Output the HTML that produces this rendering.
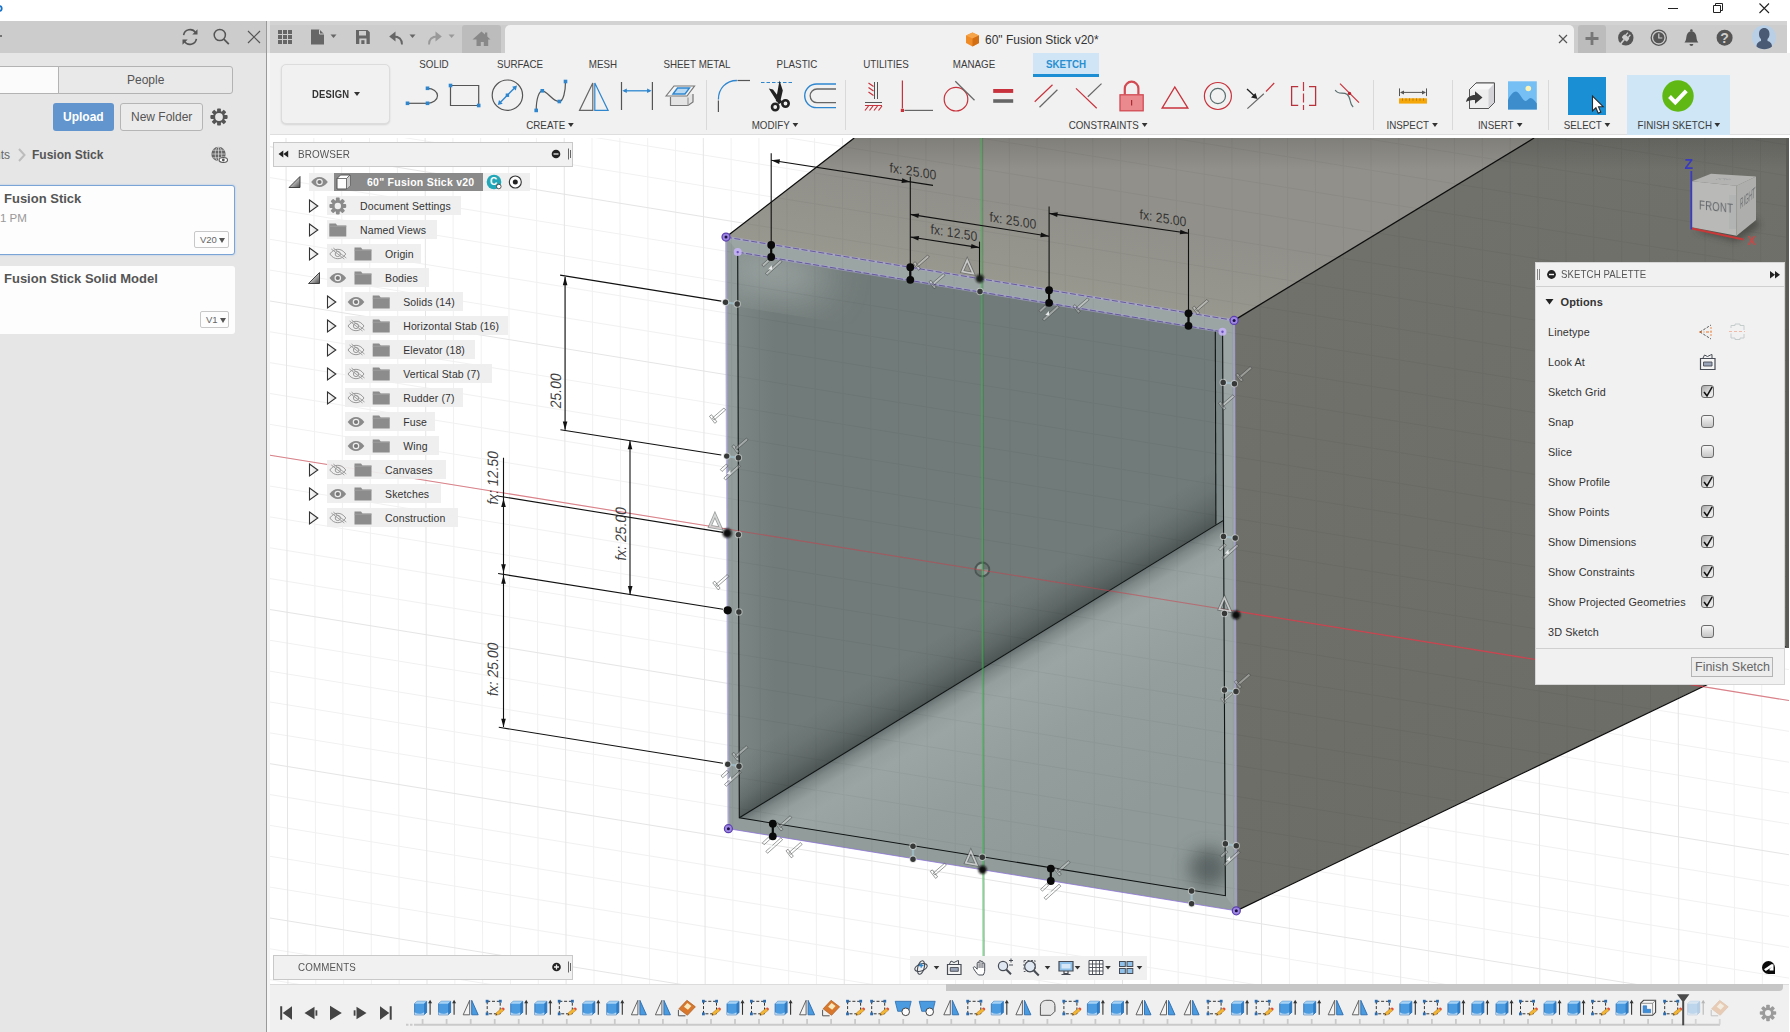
<!DOCTYPE html>
<html lang="en">
<head>
<meta charset="utf-8">
<title>60" Fusion Stick v20 - Fusion 360</title>
<style>
*{box-sizing:border-box;margin:0;padding:0}
html,body{width:1790px;height:1032px;overflow:hidden;background:#fff}
body{position:relative;font-family:"Liberation Sans",sans-serif;font-size:11px;color:#4a4a4a}
.abs{position:absolute}
svg{position:absolute;overflow:visible}
.t{position:absolute;white-space:nowrap;line-height:1}
/* top bars */
#leftbar{left:0;top:21px;width:267px;height:32px;background:#cccccc}
#left{left:0;top:53px;width:267px;height:979px;background:#e6e6e6}
#leftedge{left:266px;top:21px;width:1px;height:1011px;background:#9a9a9a}
#gap{left:267px;top:21px;width:3px;height:1011px;background:linear-gradient(#e2e2e2 0,#e2e2e2 32px,#f6f6f6 32px)}
#topbar{left:270px;top:21px;width:1517px;height:32px;background:#cdcdcd}
#topstrip{left:270px;top:21px;width:1517px;height:4px;background:#d3d3d3}
#toolbar{left:270px;top:53px;width:1520px;height:82px;background:#f1f1f1;border-bottom:1px solid #dedede}
#homebtn{left:462px;top:25px;width:39px;height:28px;background:#bcbcbc;border-radius:3px 3px 0 0}
#doctab{left:505px;top:25px;width:1069px;height:28px;background:#f1f1f1;border-radius:5px 5px 0 0}
#plusbtn{left:1578px;top:25px;width:28px;height:28px;background:#bcbcbc;border-radius:3px 3px 0 0}
.tab{position:absolute;top:58.5px;font-size:10.3px;color:#3c3c3c;white-space:nowrap;line-height:12px;transform:translateX(-50%) scaleX(.95)}
.grp{position:absolute;top:119.7px;font-size:10.3px;color:#3c3c3c;white-space:nowrap;line-height:12px;transform:translateX(-50%) scaleX(.95)}
.grp i,.dd{display:inline-block;width:0;height:0;border-left:3.5px solid transparent;border-right:3.5px solid transparent;border-top:4.5px solid #333;vertical-align:middle;margin-left:3px;position:relative;top:-1px}
.sep{position:absolute;top:80px;width:1px;height:50px;background:#d9d9d9}
/* left panel */
.btn{position:absolute;border:1px solid #b5b5b5;border-radius:3px;background:#ebebeb;font-size:12px;color:#555;text-align:center}
.card{position:absolute;left:-6px;width:241px;background:#fdfdfd;border-radius:3px}
.ver{position:absolute;border:1px solid #c8c8c8;border-radius:2px;background:#fdfdfd;font-size:9.5px;color:#666;height:17px;line-height:15px;padding-left:5px}
.ver i{display:inline-block;width:0;height:0;border-left:3.5px solid transparent;border-right:3.5px solid transparent;border-top:5px solid #555;margin-left:2px;position:relative;top:0px}
/* browser */
.row{position:absolute;height:18px;background:rgba(238,238,238,.93)}
.rt{position:absolute;font-size:10.5px;color:#333;white-space:nowrap;line-height:12px;letter-spacing:.13px}
.panelhdr{position:absolute;background:#f1f1f1;border:1px solid #c9c9c9}
/* palette */
#pal{left:1535px;top:262px;width:250px;height:423px;background:#f1f1f1;border:1px solid #d5d5d5}
.pl{position:absolute;left:1548px;font-size:10.5px;color:#333;white-space:nowrap;line-height:12px;letter-spacing:.13px}
.cb{position:absolute;left:1701px;width:13px;height:13px;border:1px solid #6a6a6a;border-radius:3px;background:linear-gradient(#f6f6f6,#c6c6c6)}
</style>
</head>
<body>
<svg id="cv" style="left:270px;top:138px;overflow:hidden" width="1519" height="846" viewBox="270 138 1519 846" font-family="Liberation Sans, sans-serif">
<defs>
<filter id="b1" x="-50%" y="-50%" width="200%" height="200%"><feGaussianBlur stdDeviation=".9"/></filter>
<filter id="b8" x="-50%" y="-50%" width="200%" height="200%"><feGaussianBlur stdDeviation="9"/></filter>
<filter id="b20" x="-50%" y="-50%" width="200%" height="200%"><feGaussianBlur stdDeviation="22"/></filter>
<linearGradient id="gtop" x1="980" y1="279" x2="993" y2="200" gradientUnits="userSpaceOnUse"><stop offset="0" stop-color="#99988f"/><stop offset=".5" stop-color="#94938c"/><stop offset="1" stop-color="#91908a"/></linearGradient>
<linearGradient id="gright" x1="1234" y1="320" x2="1500" y2="800" gradientUnits="userSpaceOnUse"><stop offset="0" stop-color="#70716b"/><stop offset="1" stop-color="#6c6d66"/></linearGradient>
<linearGradient id="gback" x1="740" y1="0" x2="775" y2="0" gradientUnits="userSpaceOnUse"><stop offset="0" stop-color="#7b8684"/><stop offset="1" stop-color="#717b79"/></linearGradient>
<linearGradient id="gao" x1="981" y1="669" x2="955" y2="626.500" gradientUnits="userSpaceOnUse"><stop offset="0" stop-color="#1c2424" stop-opacity=".42"/><stop offset=".3" stop-color="#1c2424" stop-opacity=".22"/><stop offset=".65" stop-color="#1c2424" stop-opacity=".07"/><stop offset="1" stop-color="#1c2424" stop-opacity="0"/></linearGradient>
<linearGradient id="gfloor" x1="981" y1="669" x2="1085.600" y2="839.400" gradientUnits="userSpaceOnUse"><stop offset="0" stop-color="#667070"/><stop offset=".035" stop-color="#7e8988"/><stop offset=".09" stop-color="#95a09e"/><stop offset=".17" stop-color="#9ba6a4"/><stop offset=".5" stop-color="#949f9d"/><stop offset="1" stop-color="#909b99"/></linearGradient>
<clipPath id="cback"><polygon points="737.7,252.1 1222.5,331.8 1223.5,520.4 739.3,817.8"/></clipPath>
<clipPath id="cfloor"><polygon points="739.3,817.8 1223.5,520.4 1225.4,895.7"/></clipPath>
<clipPath id="cmodel"><polygon points="726,237.1 854.2,138 1789,138 1789,645 1236.3,910.8 728.4,828.7"/></clipPath>
</defs>
<rect x="270" y="138" width="1519" height="846" fill="#fff"/>
<path d="M230.4 138L232.3 984M258.2 138L260.1 984M313.8 138L315.8 984M341.6 138L343.6 984M369.5 138L371.4 984M397.3 138L399.2 984M452.9 138L454.9 984M480.7 138L482.7 984M508.6 138L510.5 984M536.4 138L538.3 984M592.0 138L594.0 984M619.8 138L621.8 984M647.7 138L649.6 984M675.5 138L677.4 984M731.1 138L733.1 984M758.9 138L760.9 984M786.8 138L788.7 984M814.6 138L816.5 984M870.2 138L872.2 984M898.0 138L900.0 984M925.9 138L927.8 984M953.7 138L955.6 984M1009.3 138L1011.3 984M1037.1 138L1039.1 984M1065.0 138L1066.9 984M1092.8 138L1094.7 984M1148.4 138L1150.4 984M1176.2 138L1178.2 984M1204.1 138L1206.0 984M1231.9 138L1233.8 984M1287.5 138L1289.5 984M1315.3 138L1317.3 984M1343.2 138L1345.1 984M1371.0 138L1372.9 984M1426.6 138L1428.6 984M1454.4 138L1456.4 984M1482.3 138L1484.2 984M1510.1 138L1512.0 984M1565.7 138L1567.7 984M1593.5 138L1595.5 984M1621.4 138L1623.3 984M1649.2 138L1651.1 984M1704.8 138L1706.8 984M1732.6 138L1734.6 984M1760.5 138L1762.4 984M1788.3 138L1790.2 984M270 -100.1L1790 145.4M270 -69.2L1790 176.2M270 -38.4L1790 207.1M270 23.3L1790 268.8M270 54.2L1790 299.6M270 85.0L1790 330.5M270 115.9L1790 361.3M270 177.6L1790 423.0M270 208.4L1790 453.9M270 239.3L1790 484.7M270 270.1L1790 515.6M270 331.8L1790 577.3M270 362.7L1790 608.1M270 393.5L1790 639.0M270 424.4L1790 669.8M270 486.1L1790 731.5M270 516.9L1790 762.4M270 547.8L1790 793.2M270 578.6L1790 824.1M270 640.3L1790 885.8M270 671.2L1790 916.6M270 702.0L1790 947.5M270 732.9L1790 978.3M270 794.6L1790 1040.0M270 825.4L1790 1070.9M270 856.3L1790 1101.7M270 887.1L1790 1132.6M270 948.8L1790 1194.3M270 979.7L1790 1225.1" stroke="#f1f1f1" stroke-width="1" fill="none"/>
<path d="M286.0 138L287.9 984M425.1 138L427.0 984M564.2 138L566.1 984M703.3 138L705.2 984M842.4 138L844.3 984M981.5 138L983.4 984M1120.6 138L1122.5 984M1259.7 138L1261.6 984M1398.8 138L1400.7 984M1537.9 138L1539.8 984M1677.0 138L1678.9 984M1816.1 138L1818.0 984M270 -7.5L1790 237.9M270 146.7L1790 392.2M270 301.0L1790 546.4M270 455.2L1790 700.7M270 609.5L1790 854.9M270 763.7L1790 1009.2M270 918.0L1790 1163.4" stroke="#e5e5e5" stroke-width="1" fill="none"/>
<polygon points="726,237.1 854.2,138 1534.1,138 1234.1,320.4" fill="url(#gtop)"/>
<polygon points="1234.1,320.4 1534.1,138 1789,138 1789,645 1236.300,910.8" fill="url(#gright)"/>
<polygon points="726,237.1 1234.1,320.4 1236.300,910.8 728.4,828.7" fill="#929d9b"/>
<polygon points="726,237.1 1234.1,320.4 1236.300,910.8 1225.4,895.7 1222.5,331.8 737.7,252.1" fill="#9ba5a3"/>
<polygon points="737.7,252.1 1222.5,331.8 1225.4,895.7 739.3,817.8" fill="url(#gback)"/>
<g clip-path="url(#cback)"><ellipse cx="775" cy="272" rx="55" ry="20" fill="#b0b8b6" opacity=".85" filter="url(#b20)" transform="rotate(9 775 272)"/><polygon points="737.7,252.1 1222.5,331.8 1223.5,520.4 739.3,817.8" fill="url(#gao)"/></g>
<polygon points="739.3,817.8 1223.5,520.4 1225.4,895.7" fill="url(#gfloor)"/>
<g clip-path="url(#cfloor)"><circle cx="1209" cy="868" r="20" fill="#4e5757" opacity=".8" filter="url(#b8)"/></g>
<polygon points="1215.300,330.4 1222.8,331.8 1223.5,520.4 1215.9,525" fill="#7b8786"/>
<g clip-path="url(#cmodel)" opacity=".04"><path d="M230.4 138L232.3 984M258.2 138L260.1 984M313.8 138L315.8 984M341.6 138L343.6 984M369.5 138L371.4 984M397.3 138L399.2 984M452.9 138L454.9 984M480.7 138L482.7 984M508.6 138L510.5 984M536.4 138L538.3 984M592.0 138L594.0 984M619.8 138L621.8 984M647.7 138L649.6 984M675.5 138L677.4 984M731.1 138L733.1 984M758.9 138L760.9 984M786.8 138L788.7 984M814.6 138L816.5 984M870.2 138L872.2 984M898.0 138L900.0 984M925.9 138L927.8 984M953.7 138L955.6 984M1009.3 138L1011.3 984M1037.1 138L1039.1 984M1065.0 138L1066.9 984M1092.8 138L1094.7 984M1148.4 138L1150.4 984M1176.2 138L1178.2 984M1204.1 138L1206.0 984M1231.9 138L1233.8 984M1287.5 138L1289.5 984M1315.3 138L1317.3 984M1343.2 138L1345.1 984M1371.0 138L1372.9 984M1426.6 138L1428.6 984M1454.4 138L1456.4 984M1482.3 138L1484.2 984M1510.1 138L1512.0 984M1565.7 138L1567.7 984M1593.5 138L1595.5 984M1621.4 138L1623.3 984M1649.2 138L1651.1 984M1704.8 138L1706.8 984M1732.6 138L1734.6 984M1760.5 138L1762.4 984M1788.3 138L1790.2 984M270 -100.1L1790 145.4M270 -69.2L1790 176.2M270 -38.4L1790 207.1M270 23.3L1790 268.8M270 54.2L1790 299.6M270 85.0L1790 330.5M270 115.9L1790 361.3M270 177.6L1790 423.0M270 208.4L1790 453.9M270 239.3L1790 484.7M270 270.1L1790 515.6M270 331.8L1790 577.3M270 362.7L1790 608.1M270 393.5L1790 639.0M270 424.4L1790 669.8M270 486.1L1790 731.5M270 516.9L1790 762.4M270 547.8L1790 793.2M270 578.6L1790 824.1M270 640.3L1790 885.8M270 671.2L1790 916.6M270 702.0L1790 947.5M270 732.9L1790 978.3M270 794.6L1790 1040.0M270 825.4L1790 1070.9M270 856.3L1790 1101.7M270 887.1L1790 1132.6M270 948.8L1790 1194.3M270 979.7L1790 1225.1" stroke="#000" stroke-width="1" fill="none"/>
<path d="M286.0 138L287.9 984M425.1 138L427.0 984M564.2 138L566.1 984M703.3 138L705.2 984M842.4 138L844.3 984M981.5 138L983.4 984M1120.6 138L1122.5 984M1259.7 138L1261.6 984M1398.8 138L1400.7 984M1537.9 138L1539.8 984M1677.0 138L1678.9 984M1816.1 138L1818.0 984M270 -7.5L1790 237.9M270 146.7L1790 392.2M270 301.0L1790 546.4M270 455.2L1790 700.7M270 609.5L1790 854.9M270 763.7L1790 1009.2M270 918.0L1790 1163.4" stroke="#000" stroke-width="1" fill="none"/></g>
<g stroke="#0d0d0d" stroke-width="1.300" fill="none"><path d="M726 237.1L854.2 138"/><path d="M1234.1 320.4L1534.1 138"/><path d="M1236.300 910.8L1789 645.300"/></g>
<g stroke="#101414" stroke-width="1.100" fill="none"><path d="M739.300 817.8L1223.500 520.400"/><path d="M1215.300 330.400L1215.900 524.500"/><path d="M737.700 252.100L739.300 817.800L1225.400 895.700L1222.600 331.800"/></g>
<linearGradient id="gsh" x1="0" y1="138" x2="0" y2="170" gradientUnits="userSpaceOnUse"><stop offset="0" stop-color="#000" stop-opacity=".12"/><stop offset="1" stop-color="#000" stop-opacity="0"/></linearGradient>
<polygon points="812.800,170 854.2,138 1789,138 1789,170" fill="url(#gsh)"/>
<g><circle cx="982.300" cy="569.500" r="7" fill="#69736f" opacity=".9"/><path d="M982.300 569.500h-5.800a5.800 5.800 0 0 1 5.800-5.800z" fill="#94a098"/><path d="M982.300 569.500h5.800a5.800 5.800 0 0 1-5.800 5.800z" fill="#8f9a96"/><circle cx="982.300" cy="569.500" r="7" fill="none" stroke="#4c5654" stroke-width="1.800"/></g>
<path d="M270 455.200L727 529M1703 686.600L1790 700.700" stroke="#d22d3c" stroke-width="1.100" fill="none" opacity=".55"/>
<path d="M727 529L1236 611.200" stroke="#d8404e" stroke-width="1.100" fill="none" opacity=".5"/>
<path d="M1236 611.200L1703 686.600" stroke="#d8404e" stroke-width="1.300" fill="none" opacity=".85"/>
<path d="M981.500 138L983.400 956" stroke="#3cbe50" stroke-width="2" fill="none" opacity=".5"/>
<path d="M982.600 138L984.500 956" stroke="#1e3c22" stroke-width=".6" fill="none" opacity=".35"/>
<g stroke="#8a6fd8" stroke-width="1" fill="none"><path d="M1234.100 320.400L1236.300 910.800M728.400 828.700L726 237.100" stroke="#a5a0d2" stroke-width="2" opacity=".75"/><path d="M1236.300 910.800L728.400 828.700" opacity=".75"/><path d="M726 237.100L1234.100 320.400M737.700 252.100L1222.500 331.800" stroke="#aaa6d4" stroke-width="2.600" opacity=".6"/><path d="M726 237.100L1234.100 320.400M737.700 252.100L1222.500 331.800" stroke="#5a4c96" stroke-width="1" opacity=".85" stroke-dasharray="6 2.500"/></g>
<g stroke="#111" stroke-width="1.100" fill="none">
<path d="M771.200 153.300V245"/>
<path d="M910.300 176.700V280"/>
<path d="M979.500 241.600V278.400"/>
<path d="M1049.100 206.400V303"/>
<path d="M1188.500 229V326"/>
<path d="M771.200 160.300L933 185.400"/>
<path d="M910.300 214.400L1049.100 236.200"/>
<path d="M910.300 237L979.500 247.600"/>
<path d="M1049.100 213.400L1188.500 233.200"/>
<path d="M560.100 275.100L721.300 301.100"/>
<path d="M560.400 429.700L721.300 455"/>
<path d="M497.600 496L723 532.400"/>
<path d="M498.100 573.500L723 609.200"/>
<path d="M498.800 727.300L723 763.300"/>
<path d="M565.100 277V429.700"/>
<path d="M630 441V594.400"/>
<path d="M503.500 457.800V727"/>
</g>
<path d="M771.2 160.3L780.0 159.3L779.2 163.9z" fill="#111"/>
<path d="M910.3 181.9L901.5 182.9L902.3 178.3z" fill="#111"/>
<path d="M910.3 214.4L919.1 213.4L918.3 218.0z" fill="#111"/>
<path d="M1049.1 236.2L1040.3 237.2L1041.1 232.6z" fill="#111"/>
<path d="M910.3 237.0L919.1 236.0L918.3 240.6z" fill="#111"/>
<path d="M979.5 247.6L970.7 248.6L971.5 244.0z" fill="#111"/>
<path d="M1049.1 213.4L1057.8 212.3L1057.2 216.9z" fill="#111"/>
<path d="M1188.5 233.2L1179.8 234.3L1180.4 229.7z" fill="#111"/>
<path d="M565.1 276.8L567.4 285.3L562.8 285.3z" fill="#111"/>
<path d="M565.1 429.9L562.8 421.4L567.4 421.4z" fill="#111"/>
<path d="M630.0 440.7L632.3 449.2L627.7 449.2z" fill="#111"/>
<path d="M630.2 594.4L627.9 585.9L632.5 585.9z" fill="#111"/>
<path d="M503.5 498.5L505.8 507.0L501.2 507.0z" fill="#111"/>
<path d="M503.5 572.8L501.2 564.3L505.8 564.3z" fill="#111"/>
<path d="M503.5 575.2L505.8 583.7L501.2 583.7z" fill="#111"/>
<path d="M503.5 727.2L501.2 718.7L505.8 718.7z" fill="#111"/>
<text transform="matrix(.94 0.152 0 1.06 913.0 176.0)" text-anchor="middle" font-size="13" fill="#262626" fill-opacity=".88">fx: 25.00</text>
<text transform="matrix(.94 0.152 0 1.06 1013.0 225.3)" text-anchor="middle" font-size="13" fill="#262626" fill-opacity=".88">fx: 25.00</text>
<text transform="matrix(.94 0.152 0 1.06 954.0 237.5)" text-anchor="middle" font-size="13" fill="#262626" fill-opacity=".88">fx: 12.50</text>
<text transform="matrix(.94 0.152 0 1.06 1163.0 222.8)" text-anchor="middle" font-size="13" fill="#262626" fill-opacity=".88">fx: 25.00</text>
<text transform="matrix(0 -1 1.08 0.174 560.5 391.5)" text-anchor="middle" font-size="14" fill="#262626" fill-opacity=".88">25.00</text>
<text transform="matrix(0 -1 1.08 0.174 626.0 534.5)" text-anchor="middle" font-size="14" fill="#262626" fill-opacity=".88">fx: 25.00</text>
<text transform="matrix(0 -1 1.08 0.174 497.8 478.5)" text-anchor="middle" font-size="14" fill="#262626" fill-opacity=".88">fx: 12.50</text>
<text transform="matrix(0 -1 1.08 0.174 497.8 670.0)" text-anchor="middle" font-size="14" fill="#262626" fill-opacity=".88">fx: 25.00</text>
<g transform="translate(920.0 263.0) scale(1.0)"><path d="M-2.15 3.98L9.35 -6.02L7.65 -7.98L-3.85 2.02zM-6.84 0.28L-1.54 7.28L0.54 5.72L-4.76 -1.28z" fill="#fff" fill-opacity=".3" stroke="#3c4040" stroke-opacity=".6" stroke-width=".85"/></g>
<g transform="translate(935.7 281.5) scale(1.0)"><path d="M-2.15 3.98L9.35 -6.02L7.65 -7.98L-3.85 2.02zM-6.84 0.28L-1.54 7.28L0.54 5.72L-4.76 -1.28z" fill="#fff" fill-opacity=".3" stroke="#3c4040" stroke-opacity=".6" stroke-width=".85"/></g>
<g transform="translate(1079.8 305.9) scale(1.0)"><path d="M-2.15 3.98L9.35 -6.02L7.65 -7.98L-3.85 2.02zM-6.84 0.28L-1.54 7.28L0.54 5.72L-4.76 -1.28z" fill="#fff" fill-opacity=".3" stroke="#3c4040" stroke-opacity=".6" stroke-width=".85"/></g>
<g transform="translate(1199.2 307.4) scale(1.0)"><path d="M-2.15 3.98L9.35 -6.02L7.65 -7.98L-3.85 2.02zM-6.84 0.28L-1.54 7.28L0.54 5.72L-4.76 -1.28z" fill="#fff" fill-opacity=".3" stroke="#3c4040" stroke-opacity=".6" stroke-width=".85"/></g>
<g transform="translate(1242.6 374.5) scale(1.0)"><path d="M-2.15 3.98L9.35 -6.02L7.65 -7.98L-3.85 2.02zM-6.84 0.28L-1.54 7.28L0.54 5.72L-4.76 -1.28z" fill="#fff" fill-opacity=".3" stroke="#3c4040" stroke-opacity=".6" stroke-width=".85"/></g>
<g transform="translate(1225.2 402.8) scale(1.0)"><path d="M-2.15 3.98L9.35 -6.02L7.65 -7.98L-3.85 2.02zM-6.84 0.28L-1.54 7.28L0.54 5.72L-4.76 -1.28z" fill="#fff" fill-opacity=".3" stroke="#3c4040" stroke-opacity=".6" stroke-width=".85"/></g>
<g transform="translate(716.3 416.0) scale(1.0)"><path d="M-2.15 3.98L9.35 -6.02L7.65 -7.98L-3.85 2.02zM-6.84 0.28L-1.54 7.28L0.54 5.72L-4.76 -1.28z" fill="#fff" fill-opacity=".3" stroke="#3c4040" stroke-opacity=".6" stroke-width=".85"/></g>
<g transform="translate(738.8 446.0) scale(1.0)"><path d="M-2.15 3.98L9.35 -6.02L7.65 -7.98L-3.85 2.02zM-6.84 0.28L-1.54 7.28L0.54 5.72L-4.76 -1.28z" fill="#fff" fill-opacity=".3" stroke="#3c4040" stroke-opacity=".6" stroke-width=".85"/></g>
<g transform="translate(719.6 582.5) scale(1.0)"><path d="M-2.15 3.98L9.35 -6.02L7.65 -7.98L-3.85 2.02zM-6.84 0.28L-1.54 7.28L0.54 5.72L-4.76 -1.28z" fill="#fff" fill-opacity=".3" stroke="#3c4040" stroke-opacity=".6" stroke-width=".85"/></g>
<g transform="translate(1241.2 681.4) scale(1.0)"><path d="M-2.15 3.98L9.35 -6.02L7.65 -7.98L-3.85 2.02zM-6.84 0.28L-1.54 7.28L0.54 5.72L-4.76 -1.28z" fill="#fff" fill-opacity=".3" stroke="#3c4040" stroke-opacity=".6" stroke-width=".85"/></g>
<g transform="translate(738.7 753.6) scale(1.0)"><path d="M-2.15 3.98L9.35 -6.02L7.65 -7.98L-3.85 2.02zM-6.84 0.28L-1.54 7.28L0.54 5.72L-4.76 -1.28z" fill="#fff" fill-opacity=".3" stroke="#3c4040" stroke-opacity=".6" stroke-width=".85"/></g>
<g transform="translate(782.5 823.7) scale(1.0)"><path d="M-2.15 3.98L9.35 -6.02L7.65 -7.98L-3.85 2.02zM-6.84 0.28L-1.54 7.28L0.54 5.72L-4.76 -1.28z" fill="#fff" fill-opacity=".3" stroke="#3c4040" stroke-opacity=".6" stroke-width=".85"/></g>
<g transform="translate(792.8 850.5) scale(1.0)"><path d="M-2.15 3.98L9.35 -6.02L7.65 -7.98L-3.85 2.02zM-6.84 0.28L-1.54 7.28L0.54 5.72L-4.76 -1.28z" fill="#fff" fill-opacity=".3" stroke="#3c4040" stroke-opacity=".6" stroke-width=".85"/></g>
<g transform="translate(937.1 871.1) scale(1.0)"><path d="M-2.15 3.98L9.35 -6.02L7.65 -7.98L-3.85 2.02zM-6.84 0.28L-1.54 7.28L0.54 5.72L-4.76 -1.28z" fill="#fff" fill-opacity=".3" stroke="#3c4040" stroke-opacity=".6" stroke-width=".85"/></g>
<g transform="translate(1060.8 868.6) scale(1.0)"><path d="M-2.15 3.98L9.35 -6.02L7.65 -7.98L-3.85 2.02zM-6.84 0.28L-1.54 7.28L0.54 5.72L-4.76 -1.28z" fill="#fff" fill-opacity=".3" stroke="#3c4040" stroke-opacity=".6" stroke-width=".85"/></g>
<g transform="translate(1225.8 698.5) scale(0.75)"><path d="M-2.15 3.98L9.35 -6.02L7.65 -7.98L-3.85 2.02zM-6.84 0.28L-1.54 7.28L0.54 5.72L-4.76 -1.28z" fill="#fff" fill-opacity=".3" stroke="#3c4040" stroke-opacity=".6" stroke-width=".85"/></g>
<g transform="translate(771.7 264.8) scale(1.0)"><path d="M-8.12 1.96L-2.12 -3.54L-3.88 -5.46L-9.88 0.04zM-4.63 10.47L10.37 -3.03L8.63 -4.97L-6.37 8.53z" fill="#fff" fill-opacity=".3" stroke="#3c4040" stroke-opacity=".6" stroke-width=".85"/><path d="M-3.500 4.500l3.500-4 .5 4.500z" fill="#f4f6f6" opacity=".9"/></g>
<g transform="translate(1048.8 310.5) scale(1.0)"><path d="M-8.12 1.96L-2.12 -3.54L-3.88 -5.46L-9.88 0.04zM-4.63 10.47L10.37 -3.03L8.63 -4.97L-6.37 8.53z" fill="#fff" fill-opacity=".3" stroke="#3c4040" stroke-opacity=".6" stroke-width=".85"/><path d="M-3.500 4.500l3.500-4 .5 4.500z" fill="#f4f6f6" opacity=".9"/></g>
<g transform="translate(730.2 469.5) scale(1.0)"><path d="M-8.12 1.96L-2.12 -3.54L-3.88 -5.46L-9.88 0.04zM-4.63 10.47L10.37 -3.03L8.63 -4.97L-6.37 8.53z" fill="#fff" fill-opacity=".3" stroke="#3c4040" stroke-opacity=".6" stroke-width=".85"/><path d="M-3.500 4.500l3.500-4 .5 4.500z" fill="#f4f6f6" opacity=".9"/></g>
<g transform="translate(1228.4 549.0) scale(1.0)"><path d="M-8.12 1.96L-2.12 -3.54L-3.88 -5.46L-9.88 0.04zM-4.63 10.47L10.37 -3.03L8.63 -4.97L-6.37 8.53z" fill="#fff" fill-opacity=".3" stroke="#3c4040" stroke-opacity=".6" stroke-width=".85"/><path d="M-3.500 4.500l3.500-4 .5 4.500z" fill="#f4f6f6" opacity=".9"/></g>
<g transform="translate(730.9 775.8) scale(1.0)"><path d="M-8.12 1.96L-2.12 -3.54L-3.88 -5.46L-9.88 0.04zM-4.63 10.47L10.37 -3.03L8.63 -4.97L-6.37 8.53z" fill="#fff" fill-opacity=".3" stroke="#3c4040" stroke-opacity=".6" stroke-width=".85"/><path d="M-3.500 4.500l3.500-4 .5 4.500z" fill="#f4f6f6" opacity=".9"/></g>
<g transform="translate(1229.9 855.7) scale(1.0)"><path d="M-8.12 1.96L-2.12 -3.54L-3.88 -5.46L-9.88 0.04zM-4.63 10.47L10.37 -3.03L8.63 -4.97L-6.37 8.53z" fill="#fff" fill-opacity=".3" stroke="#3c4040" stroke-opacity=".6" stroke-width=".85"/><path d="M-3.500 4.500l3.500-4 .5 4.500z" fill="#f4f6f6" opacity=".9"/></g>
<g transform="translate(772.2 842.8) scale(1.0)"><path d="M-8.12 1.96L-2.12 -3.54L-3.88 -5.46L-9.88 0.04zM-4.63 10.47L10.37 -3.03L8.63 -4.97L-6.37 8.53z" fill="#fff" fill-opacity=".3" stroke="#3c4040" stroke-opacity=".6" stroke-width=".85"/><path d="M-3.500 4.500l3.500-4 .5 4.500z" fill="#f4f6f6" opacity=".9"/></g>
<g transform="translate(1050.5 889.2) scale(1.0)"><path d="M-8.12 1.96L-2.12 -3.54L-3.88 -5.46L-9.88 0.04zM-4.63 10.47L10.37 -3.03L8.63 -4.97L-6.37 8.53z" fill="#fff" fill-opacity=".3" stroke="#3c4040" stroke-opacity=".6" stroke-width=".85"/><path d="M-3.500 4.500l3.500-4 .5 4.500z" fill="#f4f6f6" opacity=".9"/></g>
<g transform="translate(968.6 267.0) scale(0.92)" fill="none" stroke-linejoin="miter"><path d="M-1.500-7.500l-5.500 12.500 12 2.200z" stroke="#4a4e4e" stroke-width="3.600" opacity=".55"/><path d="M-1.500-7.500l-5.500 12.500 12 2.200z" stroke="#eef0f0" stroke-width="1.800" opacity=".7"/></g>
<g transform="translate(716.3 521.8) scale(0.92)" fill="none" stroke-linejoin="miter"><path d="M-1.500-7.500l-5.500 12.500 12 2.200z" stroke="#4a4e4e" stroke-width="3.600" opacity=".55"/><path d="M-1.500-7.500l-5.500 12.500 12 2.200z" stroke="#eef0f0" stroke-width="1.800" opacity=".7"/></g>
<g transform="translate(1225.8 604.6) scale(0.92)" fill="none" stroke-linejoin="miter"><path d="M-1.500-7.500l-5.500 12.500 12 2.200z" stroke="#4a4e4e" stroke-width="3.600" opacity=".55"/><path d="M-1.500-7.500l-5.500 12.500 12 2.200z" stroke="#eef0f0" stroke-width="1.800" opacity=".7"/></g>
<g transform="translate(972.2 858.2) scale(0.92)" fill="none" stroke-linejoin="miter"><path d="M-1.500-7.500l-5.500 12.500 12 2.200z" stroke="#4a4e4e" stroke-width="3.600" opacity=".55"/><path d="M-1.500-7.500l-5.500 12.500 12 2.200z" stroke="#eef0f0" stroke-width="1.800" opacity=".7"/></g>
<path d="M771.2 245V257" stroke="#0a0a0a" stroke-width="2.200"/>
<circle cx="771.2" cy="245.0" r="3.9" fill="#0a0a0a"/>
<circle cx="771.2" cy="257.0" r="3.9" fill="#0a0a0a"/>
<path d="M910.3 267.2V279.8" stroke="#0a0a0a" stroke-width="2.200"/>
<circle cx="910.3" cy="267.2" r="3.9" fill="#0a0a0a"/>
<circle cx="910.3" cy="279.8" r="3.9" fill="#0a0a0a"/>
<path d="M1049.1 290.2V302.8" stroke="#0a0a0a" stroke-width="2.200"/>
<circle cx="1049.1" cy="290.2" r="3.9" fill="#0a0a0a"/>
<circle cx="1049.1" cy="302.8" r="3.9" fill="#0a0a0a"/>
<path d="M1188.5 313.3V325.8" stroke="#0a0a0a" stroke-width="2.200"/>
<circle cx="1188.5" cy="313.3" r="3.9" fill="#0a0a0a"/>
<circle cx="1188.5" cy="325.8" r="3.9" fill="#0a0a0a"/>
<path d="M772.8 823.7V836.3" stroke="#0a0a0a" stroke-width="2.200"/>
<circle cx="772.8" cy="823.7" r="3.9" fill="#0a0a0a"/>
<circle cx="772.8" cy="836.3" r="3.9" fill="#0a0a0a"/>
<path d="M1050.8 868.6V881" stroke="#0a0a0a" stroke-width="2.200"/>
<circle cx="1050.8" cy="868.6" r="3.9" fill="#0a0a0a"/>
<circle cx="1050.8" cy="881.0" r="3.9" fill="#0a0a0a"/>
<circle cx="979.8" cy="278.6" r="4.2" fill="#161a18" filter="url(#b1)"/>
<circle cx="980.0" cy="291.5" r="3.700" fill="#d5d8d7" opacity=".6"/><circle cx="980.0" cy="291.5" r="2.700" fill="#353837"/>
<circle cx="727.2" cy="533.2" r="4.6" fill="#0e0e0e" filter="url(#b1)"/>
<circle cx="738.4" cy="534.6" r="3.700" fill="#d5d8d7" opacity=".6"/><circle cx="738.4" cy="534.6" r="2.700" fill="#353837"/>
<circle cx="727.7" cy="610.3" r="4.1" fill="#0a0a0a"/>
<circle cx="738.9" cy="612.0" r="3.700" fill="#d5d8d7" opacity=".6"/><circle cx="738.9" cy="612.0" r="2.700" fill="#353837"/>
<circle cx="1236.0" cy="615.0" r="4.4" fill="#0e0e0e" filter="url(#b1)"/>
<circle cx="1224.5" cy="613.5" r="3.700" fill="#d5d8d7" opacity=".6"/><circle cx="1224.5" cy="613.5" r="2.700" fill="#353837"/>
<circle cx="982.5" cy="869.8" r="4.2" fill="#0e0e0e" filter="url(#b1)"/>
<circle cx="982.3" cy="857.2" r="3.700" fill="#d5d8d7" opacity=".6"/><circle cx="982.3" cy="857.2" r="2.700" fill="#353837"/>
<path d="M725.5 302.3L737.2 304" stroke="#a9cfe2" stroke-width="2.200" opacity=".55"/>
<path d="M726.7 456.1L738.4 457.8" stroke="#a9cfe2" stroke-width="2.200" opacity=".55"/>
<path d="M727.7 764.2L739 766.2" stroke="#a9cfe2" stroke-width="2.200" opacity=".55"/>
<path d="M1223.2 382.4L1234.4 383.7" stroke="#a9cfe2" stroke-width="2.200" opacity=".55"/>
<path d="M1223.5 536.4L1235.2 538" stroke="#a9cfe2" stroke-width="2.200" opacity=".55"/>
<path d="M1224.5 690L1236 691.5" stroke="#a9cfe2" stroke-width="2.200" opacity=".55"/>
<path d="M1225.4 843.8L1236.3 845.8" stroke="#a9cfe2" stroke-width="2.200" opacity=".55"/>
<path d="M913 846.3L913 859.2" stroke="#a9cfe2" stroke-width="2.200" opacity=".55"/>
<path d="M1191.6 891L1191.6 903.8" stroke="#a9cfe2" stroke-width="2.200" opacity=".55"/>
<circle cx="725.5" cy="302.3" r="3.700" fill="#d5d8d7" opacity=".6"/><circle cx="725.5" cy="302.3" r="2.700" fill="#353837"/>
<circle cx="737.2" cy="304.0" r="3.700" fill="#d5d8d7" opacity=".6"/><circle cx="737.2" cy="304.0" r="2.700" fill="#353837"/>
<circle cx="726.7" cy="456.1" r="3.700" fill="#d5d8d7" opacity=".6"/><circle cx="726.7" cy="456.1" r="2.700" fill="#353837"/>
<circle cx="738.4" cy="457.8" r="3.700" fill="#d5d8d7" opacity=".6"/><circle cx="738.4" cy="457.8" r="2.700" fill="#353837"/>
<circle cx="727.7" cy="764.2" r="3.700" fill="#d5d8d7" opacity=".6"/><circle cx="727.7" cy="764.2" r="2.700" fill="#353837"/>
<circle cx="739.0" cy="766.2" r="3.700" fill="#d5d8d7" opacity=".6"/><circle cx="739.0" cy="766.2" r="2.700" fill="#353837"/>
<circle cx="1223.2" cy="382.4" r="3.700" fill="#d5d8d7" opacity=".6"/><circle cx="1223.2" cy="382.4" r="2.700" fill="#353837"/>
<circle cx="1234.4" cy="383.7" r="3.700" fill="#d5d8d7" opacity=".6"/><circle cx="1234.4" cy="383.7" r="2.700" fill="#353837"/>
<circle cx="1223.5" cy="536.4" r="3.700" fill="#d5d8d7" opacity=".6"/><circle cx="1223.5" cy="536.4" r="2.700" fill="#353837"/>
<circle cx="1235.2" cy="538.0" r="3.700" fill="#d5d8d7" opacity=".6"/><circle cx="1235.2" cy="538.0" r="2.700" fill="#353837"/>
<circle cx="1224.5" cy="690.0" r="3.700" fill="#d5d8d7" opacity=".6"/><circle cx="1224.5" cy="690.0" r="2.700" fill="#353837"/>
<circle cx="1236.0" cy="691.5" r="3.700" fill="#d5d8d7" opacity=".6"/><circle cx="1236.0" cy="691.5" r="2.700" fill="#353837"/>
<circle cx="1225.4" cy="843.8" r="3.700" fill="#d5d8d7" opacity=".6"/><circle cx="1225.4" cy="843.8" r="2.700" fill="#353837"/>
<circle cx="1236.3" cy="845.8" r="3.700" fill="#d5d8d7" opacity=".6"/><circle cx="1236.3" cy="845.8" r="2.700" fill="#353837"/>
<circle cx="913.0" cy="846.3" r="3.700" fill="#d5d8d7" opacity=".6"/><circle cx="913.0" cy="846.3" r="2.700" fill="#353837"/>
<circle cx="913.0" cy="859.2" r="3.700" fill="#d5d8d7" opacity=".6"/><circle cx="913.0" cy="859.2" r="2.700" fill="#353837"/>
<circle cx="1191.6" cy="891.0" r="3.700" fill="#d5d8d7" opacity=".6"/><circle cx="1191.6" cy="891.0" r="2.700" fill="#353837"/>
<circle cx="1191.6" cy="903.8" r="3.700" fill="#d5d8d7" opacity=".6"/><circle cx="1191.6" cy="903.8" r="2.700" fill="#353837"/>
<circle cx="726" cy="237.1" r="4" fill="#9d86e0" stroke="#5b3fb0" stroke-width="1.200"/><circle cx="726" cy="237.1" r="1.500" fill="#1a0f40"/>
<circle cx="1234.1" cy="320.4" r="4" fill="#9d86e0" stroke="#5b3fb0" stroke-width="1.200"/><circle cx="1234.1" cy="320.4" r="1.500" fill="#1a0f40"/>
<circle cx="1236.3" cy="910.8" r="4" fill="#9d86e0" stroke="#5b3fb0" stroke-width="1.200"/><circle cx="1236.3" cy="910.8" r="1.500" fill="#1a0f40"/>
<circle cx="728.4" cy="828.7" r="4" fill="#9d86e0" stroke="#5b3fb0" stroke-width="1.200"/><circle cx="728.4" cy="828.7" r="1.500" fill="#1a0f40"/>
<circle cx="737.7" cy="252.1" r="4" fill="#c5b3f5" opacity=".9"/><circle cx="737.7" cy="252.1" r="1.200" fill="#6a4fc0"/>
<circle cx="1222.5" cy="331.8" r="4" fill="#c5b3f5" opacity=".9"/><circle cx="1222.5" cy="331.8" r="1.200" fill="#6a4fc0"/>
<path d="M1762 967.500a6.500 6.500 0 0 1 13 0v6.500h-6.500a6.500 6.500 0 0 1-6.500-6.500z" fill="#0a0a0a"/><path d="M1764 969.300l7.300-5h2.200v6.300h-3.900v-1.600l2.400-1.900-6.200 3.900z" fill="#fff"/>
</svg>
<svg style="left:1670px;top:150px" width="110" height="110" viewBox="1670 150 110 110">
<defs><filter id="vcb" x="-30%" y="-30%" width="160%" height="160%"><feGaussianBlur stdDeviation="3"/></filter><filter id="vcs" x="-5%" y="-5%" width="110%" height="110%"><feGaussianBlur stdDeviation=".5"/></filter></defs>
<path d="M1694 231l42 11 24-16-4-8z" fill="#33332f" opacity=".5" filter="url(#vcb)"/>
<g filter="url(#vcs)">
<path d="M1692 181.200l44.600 4.600v50l-44.600-8.500z" fill="#b9b9b7"/>
<path d="M1736.600 185.800l19.400-9.400v43.600l-19.400 15.800z" fill="#aeaeac"/>
<path d="M1692 181.200l19-7.500 45 2.700-19.400 9.400z" fill="#b3b3b1"/>
<path d="M1736.600 185.800v50" stroke="#9a9a98" stroke-width=".8"/>
<path d="M1729 195v34h7v-34z" fill="#aeb0b0" opacity=".6"/>
<path d="M1691.300 171v58.500" stroke="#3a3ac0" stroke-width="1.800"/>
<path d="M1692 228.500l51.500 11" stroke="#c83838" stroke-width="2"/>
</g></svg>
<div class="t" style="left:1698.500px;top:198px;font-size:12px;color:#63676b;line-height:14px;letter-spacing:.3px;transform-origin:0 50%;transform:matrix(.8,.085,0,1.100,0,0);filter:blur(.45px)">FRONT</div>
<div class="t" style="left:1740px;top:198px;font-size:11px;color:#6d7074;line-height:13px;transform-origin:0 50%;transform:matrix(.45,-.36,0,1.300,0,0);filter:blur(.5px)">RIGHT</div>
<div class="t" style="left:1715px;top:174.500px;font-size:7px;color:#9a9c9e;line-height:8px;transform-origin:0 50%;transform:matrix(1.100,.06,-.9,.35,0,0);filter:blur(.5px)">TOP</div>
<div class="t" style="left:1684.500px;top:157px;font-size:14px;font-weight:bold;color:#3a3ac0;line-height:14px;filter:blur(.3px)">Z</div>
<div class="t" style="left:1747.500px;top:234px;font-size:12.500px;font-weight:bold;color:#d04444;line-height:14px;filter:blur(.5px);opacity:.9">X</div>
<!-- window title bar -->
<svg style="left:0;top:0" width="1790" height="21" viewBox="0 0 1790 21">
 <path d="M-.8 6 a2.500 2.500 0 0 1 0 5" fill="none" stroke="#1a73c8" stroke-width="1.800"/>
 <path d="M1668 8.5h10" stroke="#222" stroke-width="1"/>
 <path d="M1713.5 5.5h7v7h-7z M1715.5 5.5v-2h7v7h-2" fill="none" stroke="#222" stroke-width="1"/>
 <path d="M1759.5 3.5l9.5 9.5 M1769 3.5l-9.5 9.5" stroke="#222" stroke-width="1.1"/>
</svg>

<!-- left data panel -->
<div id="leftbar" class="abs"></div>
<div id="left" class="abs"></div>
<div id="gap" class="abs"></div>
<div id="leftedge" class="abs"></div>
<svg style="left:0;top:21px" width="267" height="32" viewBox="0 21 267 32">
 <path d="M0 36h2" stroke="#555" stroke-width="1.5"/>
 <!-- refresh -->
 <g fill="none" stroke="#555" stroke-width="1.6">
  <path d="M183.6 35.2a6.6 6.6 0 0 1 12 -2.6"/>
  <path d="M196.4 38.8a6.6 6.6 0 0 1 -12 2.6"/>
 </g>
 <path d="M197.5 29.2v5.2h-5.2z M182.5 44.8v-5.2h5.2z" fill="#555"/>
 <!-- search -->
 <circle cx="219.8" cy="35" r="5.6" fill="none" stroke="#555" stroke-width="1.5"/>
 <path d="M223.8 39.2l5 5" stroke="#555" stroke-width="1.8"/>
 <!-- close -->
 <path d="M248 31l12 12M260 31l-12 12" stroke="#555" stroke-width="1.2"/>
</svg>
<div class="abs" style="left:-4px;top:66px;width:63px;height:28px;background:#fbfbfb;border:1px solid #b3b3b3;border-right:none"></div>
<div class="abs" style="left:58px;top:66px;width:175px;height:28px;background:#e9e9e9;border:1px solid #b3b3b3;border-radius:0 3px 3px 0"></div>
<div class="t" style="left:127px;top:73px;font-size:12px;color:#555;line-height:14px">People</div>
<div class="abs" style="left:53px;top:103px;width:61px;height:28px;background:#6295cd;border-radius:3px"></div>
<div class="t" style="left:63px;top:110px;font-size:12px;font-weight:bold;color:#fff;line-height:14px">Upload</div>
<div class="btn" style="left:120px;top:103px;width:83px;height:28px"></div>
<div class="t" style="left:131px;top:110px;font-size:12px;color:#555;line-height:14px">New Folder</div>
<!-- gear -->
<svg style="left:209px;top:107px" width="20" height="20" viewBox="-10 -10 20 20">
 <g fill="#555">
  <circle r="6"/>
  <g id="teeth"><rect x="-1.9" y="-8.6" width="3.8" height="17.2" rx=".8"/><rect x="-1.9" y="-8.6" width="3.8" height="17.2" rx=".8" transform="rotate(45)"/><rect x="-1.9" y="-8.6" width="3.8" height="17.2" rx=".8" transform="rotate(90)"/><rect x="-1.9" y="-8.6" width="3.8" height="17.2" rx=".8" transform="rotate(135)"/></g>
 </g>
 <circle r="3.9" fill="#e6e6e6"/><circle r="3.9" fill="none" stroke="#555" stroke-width="0"/>
 <circle r="2" fill="none" stroke="#555" stroke-width="0"/>
</svg>
<!-- breadcrumb -->
<div class="t" style="left:-6px;top:148px;font-size:12px;color:#666;line-height:14px">nts</div>
<svg style="left:17px;top:147px" width="10" height="16" viewBox="0 0 10 16"><path d="M2 2l5.5 6L2 14" fill="none" stroke="#bdbdbd" stroke-width="2"/></svg>
<div class="t" style="left:32px;top:148px;font-size:12px;font-weight:bold;color:#555;line-height:14px">Fusion Stick</div>
<!-- globe -->
<svg style="left:209px;top:145px" width="20" height="20" viewBox="-10 -10 20 20">
 <circle cx="-.5" cy="-1" r="7.2" fill="#666"/>
 <g fill="none" stroke="#e6e6e6" stroke-width=".65"><ellipse cx="-.5" cy="-1" rx="3.3" ry="7.2"/><path d="M-.5 -8.2v14.4M-7.7 -1h14.4M-6.6 -4.8h12.2M-6.6 2.8h12.2"/></g>
 <ellipse cx="4.3" cy="5" rx="5.2" ry="3.4" fill="#e6e6e6"/>
 <ellipse cx="4.3" cy="5" rx="4.2" ry="2.5" fill="#fff" stroke="#555" stroke-width="1.1"/>
 <circle cx="4.3" cy="5" r="1.4" fill="#555"/>
</svg>
<!-- cards -->
<div class="card" style="top:185px;height:70px;border:1px solid #7aa3d6;box-shadow:0 0 2px #9bbde6"></div>
<div class="t" style="left:4px;top:191px;font-size:13px;font-weight:bold;color:#555;line-height:15px">Fusion Stick</div>
<div class="t" style="left:0px;top:212px;font-size:11.5px;color:#999;line-height:13px">1 PM</div>
<div class="ver" style="left:194px;top:231px;width:35px">V20<i></i></div>
<div class="card" style="top:266px;height:68px"></div>
<div class="t" style="left:4px;top:271px;font-size:13px;font-weight:bold;color:#555;line-height:15px">Fusion Stick Solid Model</div>
<div class="ver" style="left:200px;top:311px;width:29px">V1<i></i></div>
<!-- application bar + toolbar -->
<div id="topbar" class="abs"></div>
<div id="topstrip" class="abs"></div>
<div id="toolbar" class="abs"></div>
<div id="homebtn" class="abs"></div>
<div id="doctab" class="abs"></div>
<div id="plusbtn" class="abs"></div>
<div class="abs" style="left:1627px;top:75px;width:103px;height:60px;background:#cfe6f6"></div>
<div class="abs" style="left:1033px;top:53px;width:66px;height:24px;background:#d0e6f6;border-bottom:3px solid #1c8fd4"></div>
<div class="abs" style="left:281px;top:64px;width:109px;height:60px;border:1px solid #dcdcdc;border-radius:5px;background:#f1f1f1;box-shadow:0 1px 2px rgba(0,0,0,.12)"></div>
<div class="t" style="left:311.500px;top:88px;font-size:10.5px;font-weight:bold;color:#333;line-height:12px;letter-spacing:.2px;transform-origin:0 50%;transform:scaleX(.9)">DESIGN</div><i class="dd" style="position:absolute;left:353.500px;top:92px;margin:0"></i>

<div class="tab" style="left:434px">SOLID</div>
<div class="tab" style="left:520px">SURFACE</div>
<div class="tab" style="left:603px">MESH</div>
<div class="tab" style="left:697px">SHEET METAL</div>
<div class="tab" style="left:797px">PLASTIC</div>
<div class="tab" style="left:886px">UTILITIES</div>
<div class="tab" style="left:974px">MANAGE</div>
<div class="tab" style="left:1066px;color:#2a8fd0;font-weight:bold">SKETCH</div>

<div class="grp" style="left:550px">CREATE<i></i></div>
<div class="grp" style="left:775px">MODIFY<i></i></div>
<div class="grp" style="left:1107.5px">CONSTRAINTS<i></i></div>
<div class="grp" style="left:1412px">INSPECT<i></i></div>
<div class="grp" style="left:1500px">INSERT<i></i></div>
<div class="grp" style="left:1586.5px">SELECT<i></i></div>
<div class="grp" style="left:1678.5px">FINISH SKETCH<i></i></div>

<div class="sep" style="left:706px"></div>
<div class="sep" style="left:845px"></div>
<div class="sep" style="left:1373px"></div>
<div class="sep" style="left:1452px"></div>
<div class="sep" style="left:1548px"></div>

<div class="t" style="left:985px;top:33px;font-size:12px;color:#333;line-height:14px">60" Fusion Stick v20*</div>

<svg style="left:270px;top:21px" width="1520" height="114" viewBox="270 21 1520 114">
 <!-- qat icons -->
 <g fill="#666">
  <path d="M278 30h4v4h-4zM283 30h4v4h-4zM288 30h4v4h-4zM278 35h4v4h-4zM283 35h4v4h-4zM288 35h4v4h-4zM278 40h4v4h-4zM283 40h4v4h-4zM288 40h4v4h-4z"/>
  <path d="M311 29.5h8.5l4.5 4.5v10.5h-13z"/>
  <path d="M330.5 34.5h6l-3 3.6z"/>
  <path d="M356 30h11.5l2.3 2.3v11.7h-13.8z"/>
  <path d="M409.5 34.5h6l-3 3.6z"/>
 </g>
 <path d="M319.5 29.5v4.5h4.5" fill="none" stroke="#cdcdcd" stroke-width="1"/>
 <path d="M359 31h7v4.5h-7z M359.3 38.5h7.2v5.5h-7.2z" fill="#cdcdcd"/>
 <path d="M361.3 40.2h3.2v3.8h-3.2z" fill="#666"/>
 <path d="M402 44.5c0-5.5-3-8-8.5-8" fill="none" stroke="#666" stroke-width="1.8"/>
 <path d="M389.2 36.5l6.3-5v10z" fill="#666"/>
 <path d="M429 44.5c0-5.5 3-8 8.5-8" fill="none" stroke="#999" stroke-width="1.8"/>
 <path d="M441.8 36.5l-6.3-5v10z" fill="#999"/>
 <path d="M448.6 34.5h6l-3 3.6z" fill="#999"/>
 <!-- home -->
 <path d="M472.5 39.5l9-8 3.5 3v-2h2.3v4l3.2 3h-2.3v6.5h-4.4v-4h-3v4h-4.3v-6.5z" fill="#888"/>
 <!-- doc cube -->
 <g><path d="M966 35.5l6.5-3 6.500 3v7.500l-6.500 3.500-6.500-3.500z" fill="#f08c28"/><path d="M966 35.500l6.500 3 6.500-3-6.500-3z" fill="#f7a54a"/><path d="M972.500 38.500v8l6.500-3.500v-7.500z" fill="#d46e12"/></g>
 <path d="M1559 35l8 8M1567 35l-8 8" stroke="#555" stroke-width="1.2"/>
 <path d="M1585.500 38.500h13M1592 32v13" stroke="#777" stroke-width="2.800"/>
 <!-- extensions -->
 <circle cx="1625.800" cy="37.700" r="7.700" fill="#555"/>
 <g transform="translate(1625.800 37.700) rotate(40)" fill="#cdcdcd"><rect x="-3.400" y="-2" width="6.800" height="4.600" rx="1.200"/><rect x="-2.300" y="-5.200" width="1.300" height="3.500"/><rect x="1" y="-5.200" width="1.300" height="3.500"/><rect x="-.9" y="2.400" width="1.800" height="6.500"/></g>
 <!-- clock -->
 <circle cx="1658.800" cy="37.700" r="7.600" fill="none" stroke="#555" stroke-width="1.300"/>
 <circle cx="1658.800" cy="37.700" r="5.600" fill="#555"/>
 <path d="M1658.800 33.500v4.500h3.500" fill="none" stroke="#cdcdcd" stroke-width="1.200"/>
 <!-- bell -->
 <path d="M1684.500 42.500c2-2 1.500-5 2.300-7.500.7-2.400 2.500-3.800 4.600-3.800s3.900 1.400 4.600 3.800c.8 2.500.300 5.500 2.300 7.500z" fill="#555"/>
 <circle cx="1691.400" cy="30.500" r="1.300" fill="#555"/><path d="M1689.500 44h3.800a1.900 1.900 0 0 1-3.800 0z" fill="#555"/>
 <!-- help -->
 <circle cx="1724.600" cy="37.700" r="8" fill="#555"/>
 <!-- avatar -->
 <circle cx="1764" cy="37.200" r="12" fill="#b9cfe6"/>
 <path d="M1756.500 46.500c0-3.500 2.500-5 4.500-5.500v-2c-1.500-1.200-2-3-2-5 0-3.500 2-6 5.200-6s5.300 2.500 5.300 6c0 2-.5 3.800-2 5v2c2 .5 4.500 2 4.500 5.500-2 2-5 2.700-7.700 2.700s-5.800-.7-7.800-2.700z" fill="#4a5a74"/>
</svg>
<div class="t" style="left:1720.300px;top:30.500px;font-size:14px;font-weight:bold;color:#cdcdcd;line-height:14px">?</div>
<!-- toolbar icons -->
<svg style="left:270px;top:53px" width="1520" height="82" viewBox="270 53 1520 82">
 <g fill="none" stroke-width="1.200" stroke-linecap="butt">
  <!-- line/arc -->
  <path d="M407.500 103.300h20" stroke="#555"/>
  <path d="M427.500 88.300a10 7.500 0 0 1 0 15" stroke="#555"/>
  <g fill="#2e86cf" stroke="none"><rect x="405.700" y="101.500" width="3.600" height="3.600"/><rect x="425.700" y="101.500" width="3.600" height="3.600"/><rect x="425.700" y="86.500" width="3.600" height="3.600"/></g>
  <!-- rectangle -->
  <path d="M450.500 85.500h28.200v20h-28.200z" stroke="#555"/>
  <g fill="#2e86cf" stroke="none"><rect x="448.700" y="83.700" width="3.600" height="3.600"/><rect x="476.900" y="103.700" width="3.600" height="3.600"/></g>
  <!-- circle -->
  <circle cx="507.400" cy="95.200" r="15.200" stroke="#555"/>
  <path d="M499.500 103.200l15.800-16" stroke="#2e86cf" stroke-width="1.400"/>
  <path d="M497.800 104.900l1.200-5 3.700 3.800zM517 85.500l-1.200 5-3.700-3.800z" fill="#2e86cf" stroke="none"/>
  <rect x="505.700" y="93.500" width="3.400" height="3.400" fill="#2e86cf" stroke="none"/>
  <!-- spline -->
  <path d="M536.200 110.400c0-12 3-19.600 6.100-19.600 5 0 10 10.700 17 10.700 4 0 6.200-10 6.200-20" stroke="#555"/>
  <g fill="#2e86cf" stroke="none"><rect x="534.400" y="108.600" width="3.600" height="3.600"/><rect x="540.500" y="89" width="3.600" height="3.600"/><rect x="557.500" y="99.700" width="3.600" height="3.600"/><rect x="563.700" y="79.700" width="3.600" height="3.600"/></g>
  <!-- mirror -->
  <path d="M592.800 83l-13.300 27.400h13.300z" stroke="#666"/>
  <path d="M594.800 83l13.300 27.400h-13.300z" stroke="#2e86cf"/>
  <!-- dimension -->
  <path d="M621.500 82v28M652.400 82v28" stroke="#555"/>
  <path d="M624 90.800h26" stroke="#2e86cf" stroke-width="1.300"/>
  <path d="M622.300 90.800l4.500-2.300v4.600zM651.600 90.800l-4.500-2.300v4.600z" fill="#2e86cf" stroke="none"/>
  <!-- create sketch -->
  <path d="M670.500 97v8.500h17.500l5-3.500v-8" stroke="#777" fill="#e4e4e4"/>
  <path d="M688 105.500v-8" stroke="#999"/>
  <path d="M666 96l8-10h20.500l-7.500 10z" stroke="#777" fill="#f4f4f4"/>
  <path d="M673 94l4.500-6h12l-4.500 6z" stroke="#2e86cf" fill="#b9d9f2" stroke-width="1.400"/>
  <!-- fillet -->
  <path d="M718.400 100.500v11.500" stroke="#555"/>
  <path d="M737.500 80.500h12.500" stroke="#555"/>
  <path d="M718.400 99.500c0-11 7.500-19 18.500-19" stroke="#2e86cf" stroke-width="1.300"/>
  <!-- trim (scissors) -->
  <path d="M761 82.500h32.500" stroke="#2e86cf" stroke-dasharray="3.500 2"/>
  <g stroke="#222" stroke-width="2.600">
   <circle cx="775.200" cy="107" r="3.200"/><circle cx="785.500" cy="103.500" r="3.200"/>
  </g>
  <path d="M768.800 88.500l4.200 1 9.500 12.500-3.800 2.200zM779.500 80.500l3.300 10-3 13-4-2.500z" fill="#222" stroke="none"/>
  <!-- offset -->
  <path d="M836 84h-19.500a11.800 11.800 0 0 0 0 23.600h19.500" stroke="#2e86cf" stroke-width="1.400"/>
  <path d="M836 89h-19a6.800 6.800 0 0 0 0 13.700h19" stroke="#666" stroke-width="1.300"/>
 </g>
 <g fill="none" stroke-width="1.200">
  <!-- fix/unfix -->
  <path d="M874.500 82v17M877.500 82v17" stroke="#555" stroke-width="1"/>
  <path d="M865 102.500h17" stroke="#555" stroke-width="1"/>
  <path d="M865 105.500h17M868.500 106l-3.500 4.500M873 106l-3.500 4.500M877.500 106l-3.500 4.500M882 106l-3.500 4.500" stroke="#c8323c"/>
  <path d="M873.500 86.500l-5-3.500M873.500 91l-5-3.500M873.500 95.500l-5-3.500" stroke="#c8323c"/>
  <!-- horizontal/vertical -->
  <path d="M902.400 80.500v28" stroke="#c8323c"/>
  <path d="M904.500 110.400h28.500" stroke="#666"/>
  <rect x="900.800" y="108.800" width="3.200" height="3.200" fill="#c8323c" stroke="none"/>
  <!-- tangent -->
  <circle cx="956" cy="99.200" r="11.800" stroke="#c8323c"/>
  <path d="M955.300 81.300l19.200 19" stroke="#666"/>
  <!-- equal -->
  <rect x="993.200" y="89" width="20" height="3.900" fill="#c8323c" stroke="none"/>
  <rect x="993.200" y="99.200" width="20" height="3.600" fill="#666" stroke="none"/>
  <!-- parallel -->
  <path d="M1034.700 101.800l17.800-17" stroke="#c8323c"/>
  <path d="M1039.500 107.200l17.900-17.500" stroke="#666"/>
  <!-- perpendicular -->
  <path d="M1076 88.400l20.700 19.800" stroke="#c8323c"/>
  <path d="M1087.800 96.800l13.700-13.200" stroke="#666"/>
  <!-- lock -->
  <path d="M1124.800 94.500v-6a6.800 6.800 0 0 1 13.600 0v6" stroke="#d24a52" stroke-width="2.200"/>
  <rect x="1120" y="94.800" width="23.200" height="16" fill="#ea8a8e" stroke="#d24a52" stroke-width="1.300"/>
  <path d="M1131.600 100v5.500" stroke="#a82a34" stroke-width="1.200"/>
  <!-- midpoint triangle -->
  <path d="M1174.800 87l-12.600 21h25.600z" stroke="#c8323c" stroke-width="1.400"/>
  <!-- concentric -->
  <circle cx="1217.900" cy="96" r="13.500" stroke="#c8323c"/>
  <circle cx="1217.900" cy="96" r="7.600" stroke="#5a6e6e"/>
  <!-- collinear -->
  <path d="M1247.400 108.600l16.400-14.800" stroke="#666"/>
  <path d="M1266 91.500l8.200-8.500" stroke="#c8323c"/>
  <path d="M1247 89l7.500 7" stroke="#222" stroke-width="1.300"/>
  <path d="M1257.500 99l-6.500-1.500 4.500-4.500z" fill="#222" stroke="none"/>
  <!-- symmetry -->
  <path d="M1298.200 86.600h-6.600v18.800h6.600M1309 86.600h6.600v18.800h-6.600" stroke="#b8323c" stroke-width="1.300"/>
  <path d="M1303.500 82v28" stroke="#c8323c" stroke-dasharray="9 2.500"/>
  <!-- curvature -->
  <path d="M1335.200 90c3 5.500 8 1.500 12 4.500s2 9.500 6 12.500" stroke="#5a6e6e"/>
  <path d="M1340 83.600l19 19" stroke="#c8323c"/>
  <circle cx="1349.500" cy="93.400" r="1.700" fill="#b8222c" stroke="none"/>
  <!-- inspect -->
  <rect x="1399" y="98.300" width="28" height="5.300" fill="#f5a70a" stroke="none"/>
  <path d="M1402.500 98.300v2.500M1406 98.300v2.500M1409.500 98.300v2.500M1413 98.300v2.500M1416.500 98.300v2.500M1420 98.300v2.500M1423.500 98.300v2.500" stroke="#b87800" stroke-width=".8"/>
  <path d="M1399.500 88.400v7.700M1426.500 88.400v7.700M1401 92.400h24" stroke="#555" stroke-width="1"/>
  <path d="M1400 92.400l4-2v4zM1426 92.400l-4-2v4z" fill="#555" stroke="none"/>
 </g>
 <!-- insert derive -->
 <g stroke="#555" stroke-width="1">
  <path d="M1469.500 108.500v-19l6.500-6.500h18.500v19.500l-6 6z" fill="#eeeeef"/>
  <path d="M1488.500 89.500l6-6.500v19.500l-6 6z" fill="#d4d4d8" stroke="none"/>
  <path d="M1469.500 89.500l6.500-6.500h18.500l-6 6.500z" fill="#f8f8f8" stroke="none"/>
  <path d="M1469.500 108.500v-19l6.500-6.500h18.500v19.500l-6 6z" fill="none"/>
 </g>
 <path d="M1466 102c1-5 4.500-7 9-7v-3.800l7.500 6.300-7.500 6.300v-3.800c-3.500 0-6.500.5-9 2z" fill="#3a3a3a"/>
 <!-- insert image -->
 <rect x="1508" y="81.300" width="28.800" height="28.200" fill="#76bff5"/>
 <path d="M1508 109.500v-9.500c2.500-5.500 5.500-8.500 8-8.500 3.500 0 6.500 9.500 9.500 9.500 2 0 3-3 5-3s4.500 2.500 6.300 5.500v6z" fill="#3d8ccc"/>
 <circle cx="1528.300" cy="88.500" r="2.800" fill="#fbf3b5"/>
 <!-- select -->
 <rect x="1568" y="77" width="38" height="38" fill="#1b8fd4"/>
 <path d="M1592.500 96v15l3.400-3.200 2.300 5.400 2.600-1.100-2.300-5.300 4.700-.1z" fill="#fff" stroke="#2a2a2a" stroke-width="1.100"/>
 <!-- finish -->
 <circle cx="1678" cy="96" r="15.700" fill="#5fb814"/>
 <path d="M1669.500 96.500l5.800 5.800 11-11.500" fill="none" stroke="#fff" stroke-width="4"/>
</svg>
<div class="panelhdr" style="left:273px;top:142px;width:300px;height:25px"></div>
<div class="rt" style="left:298px;top:148px;color:#555;transform-origin:0 50%;transform:scaleX(.945)">BROWSER</div>
<div class="row" style="left:309px;top:173px;width:221px"></div>
<div class="abs" style="left:334px;top:173px;width:149px;height:18px;background:#8a8a8a"></div>
<div class="rt" style="left:367px;top:176px;color:#fff;font-weight:bold;font-size:10.500px;letter-spacing:.25px">60" Fusion Stick v20</div>
<div class="row" style="left:327px;top:196.2px;width:134px;height:19.300px"></div>
<div class="rt" style="left:360px;top:200px">Document Settings</div>
<div class="row" style="left:327px;top:220.2px;width:110px;height:19.300px"></div>
<div class="rt" style="left:360px;top:224px">Named Views</div>
<div class="row" style="left:327px;top:244.2px;width:94px;height:19.300px"></div>
<div class="rt" style="left:385.0px;top:248px">Origin</div>
<div class="row" style="left:327px;top:268.2px;width:102px;height:19.300px"></div>
<div class="rt" style="left:385.0px;top:272px">Bodies</div>
<div class="row" style="left:345px;top:292.2px;width:118px;height:19.300px"></div>
<div class="rt" style="left:403.2px;top:296px">Solids (14)</div>
<div class="row" style="left:345px;top:316.2px;width:163px;height:19.300px"></div>
<div class="rt" style="left:403.2px;top:320px">Horizontal Stab (16)</div>
<div class="row" style="left:345px;top:340.2px;width:130px;height:19.300px"></div>
<div class="rt" style="left:403.2px;top:344px">Elevator (18)</div>
<div class="row" style="left:345px;top:364.2px;width:147px;height:19.300px"></div>
<div class="rt" style="left:403.2px;top:368px">Vertical Stab (7)</div>
<div class="row" style="left:345px;top:388.2px;width:118px;height:19.300px"></div>
<div class="rt" style="left:403.2px;top:392px">Rudder (7)</div>
<div class="row" style="left:345px;top:412.2px;width:90px;height:19.300px"></div>
<div class="rt" style="left:403.2px;top:416px">Fuse</div>
<div class="row" style="left:345px;top:436.2px;width:94px;height:19.300px"></div>
<div class="rt" style="left:403.2px;top:440px">Wing</div>
<div class="row" style="left:327px;top:460.2px;width:119px;height:19.300px"></div>
<div class="rt" style="left:385.0px;top:464px">Canvases</div>
<div class="row" style="left:327px;top:484.2px;width:114px;height:19.300px"></div>
<div class="rt" style="left:385.0px;top:488px">Sketches</div>
<div class="row" style="left:327px;top:508.2px;width:131px;height:19.300px"></div>
<div class="rt" style="left:385.0px;top:512px">Construction</div>
<div class="panelhdr" style="left:273px;top:955px;width:300px;height:25px"></div>
<div class="rt" style="left:298px;top:961px;color:#555;transform-origin:0 50%;transform:scaleX(.93)">COMMENTS</div>
<svg style="left:540px;top:955px" width="40" height="25" viewBox="540 955 40 25"><circle cx="556.500" cy="967" r="4.300" fill="#222"/><path d="M554 967h5M556.500 964.500v5" stroke="#f1f1f1" stroke-width="1.300"/><path d="M568.500 961.500v11M570.500 963v8" stroke="#666" stroke-width="1"/></svg>
<svg style="left:270px;top:136px" width="320" height="400" viewBox="270 136 320 400">
<defs><linearGradient id="trg" x1="0" y1="0" x2="1" y2="0"><stop offset="0" stop-color="#fff"/><stop offset="1" stop-color="#d8d8d8"/></linearGradient><linearGradient id="tog" x1="0" y1="0" x2="1" y2="1"><stop offset=".3" stop-color="#e4e4e4"/><stop offset="1" stop-color="#4a4a4a"/></linearGradient></defs>
<path d="M278.500 154l4.800-3.500v7zM283.400 154l4.800-3.500v7z" fill="#222"/>
<circle cx="556" cy="154" r="4.300" fill="#222"/><path d="M553.500 154h5" stroke="#f1f1f1" stroke-width="1.300"/>
<path d="M568.500 148.500v11M570.500 150v8" stroke="#666" stroke-width="1"/>
<path d="M300 176.5v11h-11z" fill="url(#tog)" stroke="#333" stroke-width=".9"/>
<g transform="translate(319.5 182)"><path d="M-8.300 0c2.500-3.600 5.300-5 8.300-5s5.800 1.400 8.300 5c-2.500 3.600-5.300 5-8.300 5s-5.800-1.400-8.300-5z" fill="#8a8a8a"/><circle r="3.300" fill="#eee"/><circle r="2.100" fill="#777"/></g>
<g transform="translate(343.500 182)"><path d="M-6.500 7v-10.500l3.500-3.500h9.500v10.500l-3.500 3.500z" fill="#fdfdfd" stroke="#555" stroke-width="1"/><path d="M3-3.500l3.500-3.500v10.500l-3.500 3.500z" fill="#c9c9c9"/><path d="M-6.500-3.500h9.500v10.500M3-3.500l3.500-3.500" fill="none" stroke="#555" stroke-width=".8"/></g>
<circle cx="494" cy="182" r="7.300" fill="#22a7b8"/><circle cx="498.800" cy="186.5" r="2.300" fill="#fff" stroke="#333" stroke-width=".8"/>
<circle cx="515.300" cy="182" r="6" fill="#fff" stroke="#333" stroke-width="1.100"/><circle cx="515.300" cy="182" r="2.500" fill="#222"/>
<path d="M309.5 200l8.300 6-8.300 6z" fill="url(#trg)" stroke="#333" stroke-width="1.100" stroke-linejoin="miter"/>
<g transform="translate(337.8 206)" fill="#8a8a8a"><circle r="6"/><rect x="-1.900" y="-8.400" width="3.800" height="16.800" rx=".8" transform="rotate(0)"/><rect x="-1.900" y="-8.400" width="3.800" height="16.800" rx=".8" transform="rotate(45)"/><rect x="-1.900" y="-8.400" width="3.800" height="16.800" rx=".8" transform="rotate(90)"/><rect x="-1.900" y="-8.400" width="3.800" height="16.800" rx=".8" transform="rotate(135)"/></g><circle cx="337.8" cy="206" r="3.200" fill="#eee"/>
<path d="M309.5 224l8.300 6-8.300 6z" fill="url(#trg)" stroke="#333" stroke-width="1.100" stroke-linejoin="miter"/>
<g transform="translate(337.8 230)"><path d="M-8.500-6.500h6.500l1.500 2h9v11h-17z" fill="#8c8c8c"/><path d="M-8.500-3.800h17" stroke="#a5a5a5" stroke-width=".8"/></g>
<path d="M309.5 248l8.300 6-8.300 6z" fill="url(#trg)" stroke="#333" stroke-width="1.100" stroke-linejoin="miter"/>
<g transform="translate(337.8 254)"><path d="M-8 0c2.500-3.400 5.200-4.700 8-4.700s5.500 1.300 8 4.700c-2.500 3.400-5.200 4.700-8 4.700s-5.500-1.300-8-4.700z" fill="none" stroke="#9a9a9a" stroke-width="1"/><circle r="2.600" fill="none" stroke="#9a9a9a" stroke-width="1"/><path d="M-6.500-5l13 10M-4.500-6l13 10" stroke="#9a9a9a" stroke-width=".9"/></g>
<g transform="translate(363.0 254)"><path d="M-8.500-6.500h6.500l1.500 2h9v11h-17z" fill="#8c8c8c"/><path d="M-8.500-3.800h17" stroke="#a5a5a5" stroke-width=".8"/></g>
<path d="M319.5 272.5v11h-11z" fill="url(#tog)" stroke="#333" stroke-width=".9"/>
<g transform="translate(337.8 278)"><path d="M-8.300 0c2.500-3.600 5.300-5 8.300-5s5.800 1.400 8.300 5c-2.500 3.600-5.300 5-8.300 5s-5.800-1.400-8.300-5z" fill="#8a8a8a"/><circle r="3.300" fill="#eee"/><circle r="2.100" fill="#777"/></g>
<g transform="translate(363.0 278)"><path d="M-8.500-6.500h6.500l1.500 2h9v11h-17z" fill="#8c8c8c"/><path d="M-8.500-3.800h17" stroke="#a5a5a5" stroke-width=".8"/></g>
<path d="M327.5 296l8.300 6-8.300 6z" fill="url(#trg)" stroke="#333" stroke-width="1.100" stroke-linejoin="miter"/>
<g transform="translate(356 302)"><path d="M-8.300 0c2.500-3.600 5.300-5 8.300-5s5.800 1.400 8.300 5c-2.500 3.600-5.300 5-8.300 5s-5.800-1.400-8.300-5z" fill="#8a8a8a"/><circle r="3.300" fill="#eee"/><circle r="2.100" fill="#777"/></g>
<g transform="translate(381.2 302)"><path d="M-8.500-6.500h6.500l1.500 2h9v11h-17z" fill="#8c8c8c"/><path d="M-8.500-3.800h17" stroke="#a5a5a5" stroke-width=".8"/></g>
<path d="M327.5 320l8.300 6-8.300 6z" fill="url(#trg)" stroke="#333" stroke-width="1.100" stroke-linejoin="miter"/>
<g transform="translate(356 326)"><path d="M-8 0c2.500-3.400 5.200-4.700 8-4.700s5.500 1.300 8 4.700c-2.500 3.400-5.200 4.700-8 4.700s-5.500-1.300-8-4.700z" fill="none" stroke="#9a9a9a" stroke-width="1"/><circle r="2.600" fill="none" stroke="#9a9a9a" stroke-width="1"/><path d="M-6.500-5l13 10M-4.500-6l13 10" stroke="#9a9a9a" stroke-width=".9"/></g>
<g transform="translate(381.2 326)"><path d="M-8.500-6.500h6.500l1.500 2h9v11h-17z" fill="#8c8c8c"/><path d="M-8.500-3.800h17" stroke="#a5a5a5" stroke-width=".8"/></g>
<path d="M327.5 344l8.300 6-8.300 6z" fill="url(#trg)" stroke="#333" stroke-width="1.100" stroke-linejoin="miter"/>
<g transform="translate(356 350)"><path d="M-8 0c2.500-3.400 5.200-4.700 8-4.700s5.500 1.300 8 4.700c-2.500 3.400-5.200 4.700-8 4.700s-5.500-1.300-8-4.700z" fill="none" stroke="#9a9a9a" stroke-width="1"/><circle r="2.600" fill="none" stroke="#9a9a9a" stroke-width="1"/><path d="M-6.500-5l13 10M-4.500-6l13 10" stroke="#9a9a9a" stroke-width=".9"/></g>
<g transform="translate(381.2 350)"><path d="M-8.500-6.500h6.500l1.500 2h9v11h-17z" fill="#8c8c8c"/><path d="M-8.500-3.800h17" stroke="#a5a5a5" stroke-width=".8"/></g>
<path d="M327.5 368l8.300 6-8.300 6z" fill="url(#trg)" stroke="#333" stroke-width="1.100" stroke-linejoin="miter"/>
<g transform="translate(356 374)"><path d="M-8 0c2.500-3.400 5.200-4.700 8-4.700s5.500 1.300 8 4.700c-2.500 3.400-5.200 4.700-8 4.700s-5.500-1.300-8-4.700z" fill="none" stroke="#9a9a9a" stroke-width="1"/><circle r="2.600" fill="none" stroke="#9a9a9a" stroke-width="1"/><path d="M-6.500-5l13 10M-4.500-6l13 10" stroke="#9a9a9a" stroke-width=".9"/></g>
<g transform="translate(381.2 374)"><path d="M-8.500-6.500h6.500l1.500 2h9v11h-17z" fill="#8c8c8c"/><path d="M-8.500-3.800h17" stroke="#a5a5a5" stroke-width=".8"/></g>
<path d="M327.5 392l8.300 6-8.300 6z" fill="url(#trg)" stroke="#333" stroke-width="1.100" stroke-linejoin="miter"/>
<g transform="translate(356 398)"><path d="M-8 0c2.500-3.400 5.200-4.700 8-4.700s5.500 1.300 8 4.700c-2.500 3.400-5.200 4.700-8 4.700s-5.500-1.300-8-4.700z" fill="none" stroke="#9a9a9a" stroke-width="1"/><circle r="2.600" fill="none" stroke="#9a9a9a" stroke-width="1"/><path d="M-6.500-5l13 10M-4.500-6l13 10" stroke="#9a9a9a" stroke-width=".9"/></g>
<g transform="translate(381.2 398)"><path d="M-8.500-6.500h6.500l1.500 2h9v11h-17z" fill="#8c8c8c"/><path d="M-8.500-3.800h17" stroke="#a5a5a5" stroke-width=".8"/></g>
<g transform="translate(356 422)"><path d="M-8.300 0c2.500-3.600 5.300-5 8.300-5s5.800 1.400 8.300 5c-2.500 3.600-5.300 5-8.300 5s-5.800-1.400-8.300-5z" fill="#8a8a8a"/><circle r="3.300" fill="#eee"/><circle r="2.100" fill="#777"/></g>
<g transform="translate(381.2 422)"><path d="M-8.500-6.500h6.500l1.500 2h9v11h-17z" fill="#8c8c8c"/><path d="M-8.500-3.800h17" stroke="#a5a5a5" stroke-width=".8"/></g>
<g transform="translate(356 446)"><path d="M-8.300 0c2.500-3.600 5.300-5 8.300-5s5.800 1.400 8.300 5c-2.500 3.600-5.300 5-8.300 5s-5.800-1.400-8.300-5z" fill="#8a8a8a"/><circle r="3.300" fill="#eee"/><circle r="2.100" fill="#777"/></g>
<g transform="translate(381.2 446)"><path d="M-8.500-6.500h6.500l1.500 2h9v11h-17z" fill="#8c8c8c"/><path d="M-8.500-3.800h17" stroke="#a5a5a5" stroke-width=".8"/></g>
<path d="M309.5 464l8.300 6-8.300 6z" fill="url(#trg)" stroke="#333" stroke-width="1.100" stroke-linejoin="miter"/>
<g transform="translate(337.8 470)"><path d="M-8 0c2.500-3.400 5.200-4.700 8-4.700s5.500 1.300 8 4.700c-2.500 3.400-5.200 4.700-8 4.700s-5.500-1.300-8-4.700z" fill="none" stroke="#9a9a9a" stroke-width="1"/><circle r="2.600" fill="none" stroke="#9a9a9a" stroke-width="1"/><path d="M-6.500-5l13 10M-4.500-6l13 10" stroke="#9a9a9a" stroke-width=".9"/></g>
<g transform="translate(363.0 470)"><path d="M-8.500-6.500h6.500l1.500 2h9v11h-17z" fill="#8c8c8c"/><path d="M-8.500-3.800h17" stroke="#a5a5a5" stroke-width=".8"/></g>
<path d="M309.5 488l8.300 6-8.300 6z" fill="url(#trg)" stroke="#333" stroke-width="1.100" stroke-linejoin="miter"/>
<g transform="translate(337.8 494)"><path d="M-8.300 0c2.500-3.600 5.300-5 8.300-5s5.800 1.400 8.300 5c-2.500 3.600-5.300 5-8.300 5s-5.800-1.400-8.300-5z" fill="#8a8a8a"/><circle r="3.300" fill="#eee"/><circle r="2.100" fill="#777"/></g>
<g transform="translate(363.0 494)"><path d="M-8.500-6.500h6.500l1.500 2h9v11h-17z" fill="#8c8c8c"/><path d="M-8.500-3.800h17" stroke="#a5a5a5" stroke-width=".8"/></g>
<path d="M309.5 512l8.300 6-8.300 6z" fill="url(#trg)" stroke="#333" stroke-width="1.100" stroke-linejoin="miter"/>
<g transform="translate(337.8 518)"><path d="M-8 0c2.500-3.400 5.200-4.700 8-4.700s5.500 1.300 8 4.700c-2.500 3.400-5.200 4.700-8 4.700s-5.500-1.300-8-4.700z" fill="none" stroke="#9a9a9a" stroke-width="1"/><circle r="2.600" fill="none" stroke="#9a9a9a" stroke-width="1"/><path d="M-6.500-5l13 10M-4.500-6l13 10" stroke="#9a9a9a" stroke-width=".9"/></g>
<g transform="translate(363.0 518)"><path d="M-8.500-6.500h6.500l1.500 2h9v11h-17z" fill="#8c8c8c"/><path d="M-8.500-3.800h17" stroke="#a5a5a5" stroke-width=".8"/></g>
</svg>
<div class="rt" style="left:490px;top:176px;color:#fff;font-weight:bold;font-size:10px">C</div>
<div id="pal" class="abs"></div>
<div class="abs" style="left:1536px;top:286px;width:248px;height:1px;background:#d0d0d0"></div>
<div class="abs" style="left:1536px;top:648px;width:248px;height:1px;background:#d0d0d0"></div>
<div class="pl" style="left:1560.500px;top:268px;color:#555;transform-origin:0 50%;transform:scaleX(.875);font-size:11px">SKETCH PALETTE</div>
<div class="pl" style="left:1560.500px;top:296px;font-weight:bold;font-size:11px">Options</div>
<div class="pl" style="top:326px;font-size:10.800px">Linetype</div>
<div class="pl" style="top:356px;font-size:10.800px">Look At</div>
<div class="pl" style="top:386px;font-size:10.800px">Sketch Grid</div>
<div class="cb" style="top:385.0px;background:linear-gradient(135deg,#a9a9a9,#ececec 80%)"></div>
<div class="pl" style="top:416px;font-size:10.800px">Snap</div>
<div class="cb" style="top:415.0px"></div>
<div class="pl" style="top:446px;font-size:10.800px">Slice</div>
<div class="cb" style="top:445.0px"></div>
<div class="pl" style="top:476px;font-size:10.800px">Show Profile</div>
<div class="cb" style="top:475.0px;background:linear-gradient(135deg,#a9a9a9,#ececec 80%)"></div>
<div class="pl" style="top:506px;font-size:10.800px">Show Points</div>
<div class="cb" style="top:505.0px;background:linear-gradient(135deg,#a9a9a9,#ececec 80%)"></div>
<div class="pl" style="top:536px;font-size:10.800px">Show Dimensions</div>
<div class="cb" style="top:535.0px;background:linear-gradient(135deg,#a9a9a9,#ececec 80%)"></div>
<div class="pl" style="top:566px;font-size:10.800px">Show Constraints</div>
<div class="cb" style="top:565.0px;background:linear-gradient(135deg,#a9a9a9,#ececec 80%)"></div>
<div class="pl" style="top:596px;font-size:10.800px">Show Projected Geometries</div>
<div class="cb" style="top:595.0px;background:linear-gradient(135deg,#a9a9a9,#ececec 80%)"></div>
<div class="pl" style="top:626px;font-size:10.800px">3D Sketch</div>
<div class="cb" style="top:625.0px"></div>
<div class="abs" style="left:1691px;top:657px;width:82px;height:20px;border:1px solid #b4b4b4;background:#ededed"></div>
<div class="t" style="left:1695px;top:660px;font-size:12.500px;color:#666;line-height:14px">Finish Sketch</div>
<div class="abs" style="left:1785.500px;top:138px;width:3.300px;height:510px;background:#5a5a56"></div>
<svg style="left:1530px;top:255px" width="260" height="440" viewBox="1530 255 260 440">
<path d="M1537.500 269v11M1539.500 269v11" stroke="#777" stroke-width=".9"/>
<circle cx="1551.500" cy="274.500" r="4.400" fill="#222"/><path d="M1549 274.500h5" stroke="#f1f1f1" stroke-width="1.400"/>
<path d="M1770 271l5 3.700-5 3.700zM1775 271l5 3.700-5 3.700z" fill="#222"/>
<path d="M1545.500 299h8l-4 5.500z" fill="#222"/>
<g fill="none" stroke-width="1"><path d="M1700 332l11-7M1700 332l11 7" stroke="#555" stroke-dasharray="2.500 1.500"/><path d="M1699 332h14" stroke="#e8742a" stroke-dasharray="3 1.500 1 1.500"/><path d="M1711 327v10" stroke="#e8742a" stroke-dasharray="2 1.500" stroke-width=".8"/></g>
<g fill="none" stroke="#c4cccc" stroke-width="1"><path d="M1731 328v-2.500h4v-1.500h5v1.500h4v4.500M1744 334v4h-4v1.500h-5v-1.500h-4v-4.500"/><path d="M1729 331.500h16" stroke="#f0b9a8" stroke-dasharray="3 2"/></g>
<g><path d="M1700.500 358.500h14.500v11h-14.500z" fill="#f4f4f4" stroke="#474c55" stroke-width="1.200"/><path d="M1703.500 362h8.500v4h-8.500z" fill="#9aa4b8" stroke="#474c55" stroke-width=".9"/><path d="M1703 358l1.500-3 3 1.500 3-1.500 1.500-.500v3.500" fill="none" stroke="#474c55" stroke-width="1"/></g>
<path d="M1704 392.0l3 3.800 5.200-9" fill="none" stroke="#111" stroke-width="1.500"/>
<path d="M1704 482.0l3 3.800 5.200-9" fill="none" stroke="#111" stroke-width="1.500"/>
<path d="M1704 512.0l3 3.800 5.200-9" fill="none" stroke="#111" stroke-width="1.500"/>
<path d="M1704 542.0l3 3.800 5.200-9" fill="none" stroke="#111" stroke-width="1.500"/>
<path d="M1704 572.0l3 3.800 5.200-9" fill="none" stroke="#111" stroke-width="1.500"/>
<path d="M1704 602.0l3 3.800 5.200-9" fill="none" stroke="#111" stroke-width="1.500"/>
</svg>
<div class="abs" style="left:910px;top:956px;width:237px;height:24px;background:#f0f0f0"></div>
<svg style="left:910px;top:956px" width="237" height="24" viewBox="910 956 237 24">
<g fill="none" stroke="#474c55" stroke-width="1.100"><ellipse cx="921" cy="967.500" rx="6.500" ry="3.500" transform="rotate(-20 921 967.500)"/><ellipse cx="921" cy="967.500" rx="3.200" ry="7" transform="rotate(15 921 967.500)"/></g><path d="M919 965.500h4.500M921.200 963.300v4.500" stroke="#2e86cf" stroke-width="1.300"/>
<path d="M933.7 966h5.600l-2.800 3.600z" fill="#333"/>
<g><path d="M947.500 964.500h13.500v10h-13.500z" fill="#f4f4f4" stroke="#474c55" stroke-width="1.200"/><path d="M950.300 967.500h8v3.800h-8z" fill="#9aa4b8" stroke="#474c55" stroke-width=".9"/><path d="M949.500 964l1.500-3 3 1.500 3-1.500 1.500-.500v3.500" fill="none" stroke="#474c55" stroke-width="1"/></g>
<path d="M978.500 975c-1.800-1.500-4-4.800-5-6.500-.8-1.400.8-2.400 1.900-1.300l1.800 2v-6c0-1.400 1.900-1.400 1.900 0v-1.700c0-1.400 1.900-1.400 1.900 0v.7c0-1.400 1.900-1.400 1.900 0v1.500c0-1.300 1.800-1.300 1.800 0v6.300c0 2.200-.7 3.800-1.500 5z" fill="#fff" stroke="#474c55" stroke-width="1"/><path d="M979.100 963.500v4.500M981 962.500v5.500M982.900 963.500v4.500" stroke="#474c55" stroke-width=".9"/>
<circle cx="1003" cy="966" r="4.600" fill="#dfe8f2" stroke="#474c55" stroke-width="1.200"/><path d="M1006.300 969.500l4.700 4.700" stroke="#474c55" stroke-width="2"/><path d="M1009 960.500h4M1011 958.500v4M1009 965h4" stroke="#474c55" stroke-width="1"/>
<circle cx="1030" cy="966.500" r="5.300" fill="#dfe8f2" stroke="#474c55" stroke-width="1.200"/><path d="M1033.800 970.500l5 5" stroke="#474c55" stroke-width="2"/><path d="M1024 960.500h11v11h-11z" fill="none" stroke="#474c55" stroke-width=".9" stroke-dasharray="2 1.500"/>
<path d="M1044.7 966h5.600l-2.800 3.600z" fill="#333"/>
<path d="M1059 961.500h14v9.500h-14z" fill="#8fc1ea" stroke="#474c55" stroke-width="1.200"/><path d="M1061.500 964h9v4.500h-9z" fill="#d6e8f7"/><path d="M1064 971v2.500h4v-2.500M1061.500 974.500h9" stroke="#474c55" stroke-width="1.200" fill="none"/>
<path d="M1074.7 966h5.600l-2.800 3.600z" fill="#333"/>
<path d="M1089 960.500h14v14h-14z" fill="#fff" stroke="#474c55" stroke-width="1"/><path d="M1092.500 960.500v14M1096 960.500v14M1099.500 960.500v14M1089 964h14M1089 967.500h14M1089 971h14" stroke="#474c55" stroke-width=".9"/>
<path d="M1105.2 966h5.600l-2.800 3.600z" fill="#333"/>
<g fill="#8fc1ea" stroke="#474c55" stroke-width="1"><rect x="1119.500" y="961.500" width="5.800" height="5"/><rect x="1127" y="961.500" width="5.800" height="5"/><rect x="1119.500" y="968.500" width="5.800" height="5"/><rect x="1127" y="968.500" width="5.800" height="5"/></g>
<path d="M1136.7 966h5.600l-2.800 3.600z" fill="#333"/>
</svg>
<div class="abs" style="left:270px;top:984px;width:1519px;height:48px;background:#f0f0f0;border-top:1px solid #dcdcdc"></div>
<div class="abs" style="left:945.500px;top:984.300px;width:837px;height:6.700px;background:#c6c6c6;border-radius:0 0 4px 0"></div>
<svg style="left:270px;top:984px" width="1520" height="48" viewBox="270 984 1520 48">
<g fill="#444"><path d="M280.200 1006.200h2v13.500h-2zM292 1006.200v13.500l-9.300-6.750z"/><path d="M314.500 1006.700v12.600l-10-6.300z"/><rect x="315.500" y="1010.300" width="1.800" height="5.400"/><path d="M330 1005.800l11.800 7.200-11.800 7.200z"/><path d="M356.500 1006.700v12.600l10-6.300z"/><rect x="353.700" y="1010.300" width="1.800" height="5.400"/><path d="M380 1006.200v13.500l9.300-6.750zM389.700 1006.200h2v13.500h-2z"/></g>
<g transform="translate(422.6 1007.8)"><path d="M-8 7v-11l2.500-2.500h9.500v11l-2.500 2.500z" fill="#4a9be0" stroke="#2b6cb0" stroke-width=".8"/><path d="M-8-4l2.500-2.500h9.500l-2.500 2.500z" fill="#a6d2f5"/><path d="M1.500-4l2.500-2.500v11l-2.500 2.500z" fill="#2f7cc4"/><path d="M-8 4.500c3 2 6.500 2 9.500 0v2.500h-9.500z" fill="#cfe3f5" opacity=".85"/><path d="M7.500 7v-13" stroke="#333" stroke-width="1.100"/><path d="M5.500-4.500l2-3.500 2 3.500z" fill="#333"/></g>
<path d="M422.6 1019v5.500" stroke="#cacaca" stroke-width="1.800"/>
<g transform="translate(446.6 1007.8)"><path d="M-8 7v-11l2.500-2.500h9.500v11l-2.500 2.500z" fill="#4a9be0" stroke="#2b6cb0" stroke-width=".8"/><path d="M-8-4l2.500-2.500h9.500l-2.500 2.500z" fill="#a6d2f5"/><path d="M1.500-4l2.500-2.500v11l-2.500 2.500z" fill="#2f7cc4"/><path d="M-8 4.500c3 2 6.500 2 9.500 0v2.500h-9.500z" fill="#cfe3f5" opacity=".85"/><path d="M7.500 7v-13" stroke="#333" stroke-width="1.100"/><path d="M5.500-4.500l2-3.500 2 3.500z" fill="#333"/></g>
<path d="M446.6 1019v5.500" stroke="#cacaca" stroke-width="1.800"/>
<g transform="translate(470.7 1007.8)"><path d="M-1-7.500l-6.500 14.500h6.500z" fill="#f4f4f4" stroke="#555" stroke-width=".9"/><path d="M1-7.500l6.500 14.500h-6.500z" fill="#4a9be0" stroke="#2b6cb0" stroke-width=".9"/></g>
<path d="M470.7 1019v5.500" stroke="#cacaca" stroke-width="1.800"/>
<g transform="translate(494.7 1007.8)"><path d="M-7.500-6.500h13v12.500h-13z" fill="none" stroke="#333" stroke-width="1" stroke-dasharray="3 1.800"/><g fill="#2b6cb0"><rect x="-9" y="-8" width="2.800" height="2.800"/><rect x="4.200" y="-8" width="2.800" height="2.800"/><rect x="-9" y="4.700" width="2.800" height="2.800"/></g><path d="M1 7.500l.8-2.800 5.200-4.200 2 2.200-5.200 4.200z" fill="#f2b632" stroke="#b8741a" stroke-width=".5"/><path d="M7 .5l1-.8c.7-.5 2.500 1.300 1.900 2l-.9 1z" fill="#e24a3a"/><path d="M1 7.500l.4-1.500 1.200 1.100z" fill="#333"/></g>
<path d="M494.7 1019v5.500" stroke="#cacaca" stroke-width="1.800"/>
<g transform="translate(518.7 1007.8)"><path d="M-8 7v-11l2.500-2.500h9.500v11l-2.500 2.500z" fill="#4a9be0" stroke="#2b6cb0" stroke-width=".8"/><path d="M-8-4l2.500-2.500h9.500l-2.500 2.500z" fill="#a6d2f5"/><path d="M1.500-4l2.500-2.500v11l-2.500 2.500z" fill="#2f7cc4"/><path d="M-8 4.500c3 2 6.500 2 9.500 0v2.500h-9.500z" fill="#cfe3f5" opacity=".85"/><path d="M7.500 7v-13" stroke="#333" stroke-width="1.100"/><path d="M5.500-4.500l2-3.500 2 3.500z" fill="#333"/></g>
<path d="M518.7 1019v5.500" stroke="#cacaca" stroke-width="1.800"/>
<g transform="translate(542.8 1007.8)"><path d="M-8 7v-11l2.500-2.500h9.500v11l-2.500 2.500z" fill="#4a9be0" stroke="#2b6cb0" stroke-width=".8"/><path d="M-8-4l2.500-2.500h9.500l-2.500 2.500z" fill="#a6d2f5"/><path d="M1.500-4l2.500-2.500v11l-2.500 2.500z" fill="#2f7cc4"/><path d="M-8 4.500c3 2 6.500 2 9.500 0v2.500h-9.500z" fill="#cfe3f5" opacity=".85"/><path d="M7.500 7v-13" stroke="#333" stroke-width="1.100"/><path d="M5.500-4.500l2-3.500 2 3.500z" fill="#333"/></g>
<path d="M542.8 1019v5.500" stroke="#cacaca" stroke-width="1.800"/>
<g transform="translate(566.8 1007.8)"><path d="M-7.500-6.500h13v12.500h-13z" fill="none" stroke="#333" stroke-width="1" stroke-dasharray="3 1.800"/><g fill="#2b6cb0"><rect x="-9" y="-8" width="2.800" height="2.800"/><rect x="4.200" y="-8" width="2.800" height="2.800"/><rect x="-9" y="4.700" width="2.800" height="2.800"/></g><path d="M1 7.500l.8-2.800 5.200-4.200 2 2.200-5.200 4.200z" fill="#f2b632" stroke="#b8741a" stroke-width=".5"/><path d="M7 .5l1-.8c.7-.5 2.500 1.300 1.900 2l-.9 1z" fill="#e24a3a"/><path d="M1 7.500l.4-1.500 1.200 1.100z" fill="#333"/></g>
<path d="M566.8 1019v5.500" stroke="#cacaca" stroke-width="1.800"/>
<g transform="translate(590.8 1007.8)"><path d="M-8 7v-11l2.500-2.500h9.500v11l-2.500 2.500z" fill="#4a9be0" stroke="#2b6cb0" stroke-width=".8"/><path d="M-8-4l2.500-2.500h9.500l-2.500 2.500z" fill="#a6d2f5"/><path d="M1.500-4l2.500-2.500v11l-2.500 2.500z" fill="#2f7cc4"/><path d="M-8 4.500c3 2 6.500 2 9.500 0v2.500h-9.500z" fill="#cfe3f5" opacity=".85"/><path d="M7.500 7v-13" stroke="#333" stroke-width="1.100"/><path d="M5.500-4.500l2-3.500 2 3.500z" fill="#333"/></g>
<path d="M590.8 1019v5.500" stroke="#cacaca" stroke-width="1.800"/>
<g transform="translate(614.8 1007.8)"><path d="M-8 7v-11l2.500-2.500h9.500v11l-2.500 2.500z" fill="#4a9be0" stroke="#2b6cb0" stroke-width=".8"/><path d="M-8-4l2.500-2.500h9.500l-2.500 2.500z" fill="#a6d2f5"/><path d="M1.500-4l2.500-2.500v11l-2.500 2.500z" fill="#2f7cc4"/><path d="M-8 4.500c3 2 6.500 2 9.500 0v2.500h-9.500z" fill="#cfe3f5" opacity=".85"/><path d="M7.500 7v-13" stroke="#333" stroke-width="1.100"/><path d="M5.500-4.500l2-3.500 2 3.500z" fill="#333"/></g>
<path d="M614.8 1019v5.500" stroke="#cacaca" stroke-width="1.800"/>
<g transform="translate(638.9 1007.8)"><path d="M-1-7.500l-6.500 14.500h6.500z" fill="#f4f4f4" stroke="#555" stroke-width=".9"/><path d="M1-7.500l6.500 14.500h-6.500z" fill="#4a9be0" stroke="#2b6cb0" stroke-width=".9"/></g>
<path d="M638.9 1019v5.500" stroke="#cacaca" stroke-width="1.800"/>
<g transform="translate(662.9 1007.8)"><path d="M-1-7.500l-6.500 14.500h6.500z" fill="#f4f4f4" stroke="#555" stroke-width=".9"/><path d="M1-7.500l6.500 14.500h-6.500z" fill="#4a9be0" stroke="#2b6cb0" stroke-width=".9"/></g>
<path d="M662.9 1019v5.500" stroke="#cacaca" stroke-width="1.800"/>
<g transform="translate(686.9 1007.8)"><path d="M-8 1l8-8.500 8.500 6.500-8 8.500z" fill="#d9782d" stroke="#a85a1c" stroke-width=".7"/><path d="M-3-1l3.500-3.800 4 3-3.500 3.800z" fill="#f7e9c0"/><path d="M-8.500 2v6h7" fill="none" stroke="#555" stroke-width="1"/></g>
<path d="M686.9 1019v5.500" stroke="#cacaca" stroke-width="1.800"/>
<g transform="translate(711.0 1007.8)"><path d="M-7.500-6.500h13v12.500h-13z" fill="none" stroke="#333" stroke-width="1" stroke-dasharray="3 1.800"/><g fill="#2b6cb0"><rect x="-9" y="-8" width="2.800" height="2.800"/><rect x="4.200" y="-8" width="2.800" height="2.800"/><rect x="-9" y="4.700" width="2.800" height="2.800"/></g><path d="M1 7.500l.8-2.800 5.200-4.200 2 2.200-5.200 4.200z" fill="#f2b632" stroke="#b8741a" stroke-width=".5"/><path d="M7 .5l1-.8c.7-.5 2.500 1.300 1.900 2l-.9 1z" fill="#e24a3a"/><path d="M1 7.500l.4-1.500 1.200 1.100z" fill="#333"/></g>
<path d="M711.0 1019v5.500" stroke="#cacaca" stroke-width="1.800"/>
<g transform="translate(735.0 1007.8)"><path d="M-8 7v-11l2.500-2.500h9.500v11l-2.500 2.500z" fill="#4a9be0" stroke="#2b6cb0" stroke-width=".8"/><path d="M-8-4l2.500-2.500h9.500l-2.500 2.500z" fill="#a6d2f5"/><path d="M1.500-4l2.500-2.500v11l-2.500 2.500z" fill="#2f7cc4"/><path d="M-8 4.500c3 2 6.500 2 9.500 0v2.500h-9.500z" fill="#cfe3f5" opacity=".85"/><path d="M7.500 7v-13" stroke="#333" stroke-width="1.100"/><path d="M5.500-4.500l2-3.500 2 3.500z" fill="#333"/></g>
<path d="M735.0 1019v5.500" stroke="#cacaca" stroke-width="1.800"/>
<g transform="translate(759.0 1007.8)"><path d="M-7.500-6.500h13v12.500h-13z" fill="none" stroke="#333" stroke-width="1" stroke-dasharray="3 1.800"/><g fill="#2b6cb0"><rect x="-9" y="-8" width="2.800" height="2.800"/><rect x="4.200" y="-8" width="2.800" height="2.800"/><rect x="-9" y="4.700" width="2.800" height="2.800"/></g><path d="M1 7.500l.8-2.800 5.200-4.200 2 2.200-5.200 4.200z" fill="#f2b632" stroke="#b8741a" stroke-width=".5"/><path d="M7 .5l1-.8c.7-.5 2.500 1.300 1.900 2l-.9 1z" fill="#e24a3a"/><path d="M1 7.500l.4-1.500 1.200 1.100z" fill="#333"/></g>
<path d="M759.0 1019v5.500" stroke="#cacaca" stroke-width="1.800"/>
<g transform="translate(783.1 1007.8)"><path d="M-8 7v-11l2.500-2.500h9.500v11l-2.500 2.500z" fill="#4a9be0" stroke="#2b6cb0" stroke-width=".8"/><path d="M-8-4l2.500-2.500h9.500l-2.500 2.500z" fill="#a6d2f5"/><path d="M1.500-4l2.500-2.500v11l-2.500 2.500z" fill="#2f7cc4"/><path d="M-8 4.500c3 2 6.500 2 9.500 0v2.500h-9.500z" fill="#cfe3f5" opacity=".85"/><path d="M7.500 7v-13" stroke="#333" stroke-width="1.100"/><path d="M5.500-4.500l2-3.500 2 3.500z" fill="#333"/></g>
<path d="M783.1 1019v5.500" stroke="#cacaca" stroke-width="1.800"/>
<g transform="translate(807.1 1007.8)"><path d="M-1-7.500l-6.500 14.500h6.500z" fill="#f4f4f4" stroke="#555" stroke-width=".9"/><path d="M1-7.500l6.500 14.500h-6.500z" fill="#4a9be0" stroke="#2b6cb0" stroke-width=".9"/></g>
<path d="M807.1 1019v5.500" stroke="#cacaca" stroke-width="1.800"/>
<g transform="translate(831.1 1007.8)"><path d="M-8 1l8-8.500 8.500 6.500-8 8.500z" fill="#d9782d" stroke="#a85a1c" stroke-width=".7"/><path d="M-3-1l3.500-3.800 4 3-3.500 3.800z" fill="#f7e9c0"/><path d="M-8.500 2v6h7" fill="none" stroke="#555" stroke-width="1"/></g>
<path d="M831.1 1019v5.500" stroke="#cacaca" stroke-width="1.800"/>
<g transform="translate(855.1 1007.8)"><path d="M-7.500-6.500h13v12.500h-13z" fill="none" stroke="#333" stroke-width="1" stroke-dasharray="3 1.800"/><g fill="#2b6cb0"><rect x="-9" y="-8" width="2.800" height="2.800"/><rect x="4.200" y="-8" width="2.800" height="2.800"/><rect x="-9" y="4.700" width="2.800" height="2.800"/></g><path d="M1 7.500l.8-2.800 5.200-4.200 2 2.200-5.200 4.200z" fill="#f2b632" stroke="#b8741a" stroke-width=".5"/><path d="M7 .5l1-.8c.7-.5 2.500 1.300 1.900 2l-.9 1z" fill="#e24a3a"/><path d="M1 7.500l.4-1.500 1.200 1.100z" fill="#333"/></g>
<path d="M855.1 1019v5.500" stroke="#cacaca" stroke-width="1.800"/>
<g transform="translate(879.2 1007.8)"><path d="M-7.500-6.500h13v12.500h-13z" fill="none" stroke="#333" stroke-width="1" stroke-dasharray="3 1.800"/><g fill="#2b6cb0"><rect x="-9" y="-8" width="2.800" height="2.800"/><rect x="4.200" y="-8" width="2.800" height="2.800"/><rect x="-9" y="4.700" width="2.800" height="2.800"/></g><path d="M1 7.500l.8-2.800 5.200-4.200 2 2.200-5.200 4.200z" fill="#f2b632" stroke="#b8741a" stroke-width=".5"/><path d="M7 .5l1-.8c.7-.5 2.500 1.300 1.900 2l-.9 1z" fill="#e24a3a"/><path d="M1 7.500l.4-1.500 1.200 1.100z" fill="#333"/></g>
<path d="M879.2 1019v5.500" stroke="#cacaca" stroke-width="1.800"/>
<g transform="translate(903.2 1007.8)"><path d="M-8-6.500h16l-2.500 10h-11z" fill="#4a9be0" stroke="#2b6cb0" stroke-width=".8"/><circle cx="2.500" cy="4" r="3.800" fill="#fdfdfd" stroke="#444" stroke-width="1"/></g>
<path d="M903.2 1019v5.500" stroke="#cacaca" stroke-width="1.800"/>
<g transform="translate(927.2 1007.8)"><path d="M-8-6.500h16l-2.500 10h-11z" fill="#4a9be0" stroke="#2b6cb0" stroke-width=".8"/><circle cx="2.500" cy="4" r="3.800" fill="#fdfdfd" stroke="#444" stroke-width="1"/></g>
<path d="M927.2 1019v5.500" stroke="#cacaca" stroke-width="1.800"/>
<g transform="translate(951.3 1007.8)"><path d="M-1-7.500l-6.500 14.500h6.500z" fill="#f4f4f4" stroke="#555" stroke-width=".9"/><path d="M1-7.500l6.500 14.500h-6.500z" fill="#4a9be0" stroke="#2b6cb0" stroke-width=".9"/></g>
<path d="M951.3 1019v5.500" stroke="#cacaca" stroke-width="1.800"/>
<g transform="translate(975.3 1007.8)"><path d="M-7.500-6.500h13v12.500h-13z" fill="none" stroke="#333" stroke-width="1" stroke-dasharray="3 1.800"/><g fill="#2b6cb0"><rect x="-9" y="-8" width="2.800" height="2.800"/><rect x="4.200" y="-8" width="2.800" height="2.800"/><rect x="-9" y="4.700" width="2.800" height="2.800"/></g><path d="M1 7.500l.8-2.800 5.200-4.200 2 2.200-5.200 4.200z" fill="#f2b632" stroke="#b8741a" stroke-width=".5"/><path d="M7 .5l1-.8c.7-.5 2.500 1.300 1.900 2l-.9 1z" fill="#e24a3a"/><path d="M1 7.500l.4-1.500 1.200 1.100z" fill="#333"/></g>
<path d="M975.3 1019v5.500" stroke="#cacaca" stroke-width="1.800"/>
<g transform="translate(999.3 1007.8)"><path d="M-8 7v-11l2.500-2.500h9.500v11l-2.500 2.500z" fill="#4a9be0" stroke="#2b6cb0" stroke-width=".8"/><path d="M-8-4l2.500-2.500h9.500l-2.500 2.500z" fill="#a6d2f5"/><path d="M1.500-4l2.500-2.500v11l-2.500 2.500z" fill="#2f7cc4"/><path d="M-8 4.500c3 2 6.500 2 9.500 0v2.500h-9.500z" fill="#cfe3f5" opacity=".85"/><path d="M7.500 7v-13" stroke="#333" stroke-width="1.100"/><path d="M5.500-4.500l2-3.500 2 3.500z" fill="#333"/></g>
<path d="M999.3 1019v5.500" stroke="#cacaca" stroke-width="1.800"/>
<g transform="translate(1023.4 1007.8)"><path d="M-1-7.500l-6.500 14.500h6.500z" fill="#f4f4f4" stroke="#555" stroke-width=".9"/><path d="M1-7.500l6.500 14.500h-6.500z" fill="#4a9be0" stroke="#2b6cb0" stroke-width=".9"/></g>
<path d="M1023.4 1019v5.500" stroke="#cacaca" stroke-width="1.800"/>
<g transform="translate(1047.4 1007.8)"><path d="M-7 7.500v-9c0-4 3-6 6.500-6h3c3 0 5 2.500 5 5v6l-4 4z" fill="#e6e6e6" stroke="#555" stroke-width="1"/><path d="M3.500 7.500l4-4v-5" fill="none" stroke="#888" stroke-width=".8"/></g>
<path d="M1047.4 1019v5.500" stroke="#cacaca" stroke-width="1.800"/>
<g transform="translate(1071.4 1007.8)"><path d="M-7.500-6.500h13v12.500h-13z" fill="none" stroke="#333" stroke-width="1" stroke-dasharray="3 1.800"/><g fill="#2b6cb0"><rect x="-9" y="-8" width="2.800" height="2.800"/><rect x="4.200" y="-8" width="2.800" height="2.800"/><rect x="-9" y="4.700" width="2.800" height="2.800"/></g><path d="M1 7.500l.8-2.800 5.200-4.200 2 2.200-5.200 4.200z" fill="#f2b632" stroke="#b8741a" stroke-width=".5"/><path d="M7 .5l1-.8c.7-.5 2.500 1.300 1.900 2l-.9 1z" fill="#e24a3a"/><path d="M1 7.500l.4-1.500 1.200 1.100z" fill="#333"/></g>
<path d="M1071.4 1019v5.500" stroke="#cacaca" stroke-width="1.800"/>
<g transform="translate(1095.4 1007.8)"><path d="M-8 7v-11l2.500-2.500h9.500v11l-2.500 2.500z" fill="#4a9be0" stroke="#2b6cb0" stroke-width=".8"/><path d="M-8-4l2.500-2.500h9.500l-2.500 2.500z" fill="#a6d2f5"/><path d="M1.500-4l2.500-2.500v11l-2.500 2.500z" fill="#2f7cc4"/><path d="M-8 4.500c3 2 6.500 2 9.500 0v2.500h-9.500z" fill="#cfe3f5" opacity=".85"/><path d="M7.500 7v-13" stroke="#333" stroke-width="1.100"/><path d="M5.500-4.500l2-3.500 2 3.500z" fill="#333"/></g>
<path d="M1095.4 1019v5.500" stroke="#cacaca" stroke-width="1.800"/>
<g transform="translate(1119.5 1007.8)"><path d="M-8 7v-11l2.500-2.500h9.500v11l-2.500 2.500z" fill="#4a9be0" stroke="#2b6cb0" stroke-width=".8"/><path d="M-8-4l2.500-2.500h9.500l-2.500 2.500z" fill="#a6d2f5"/><path d="M1.500-4l2.500-2.500v11l-2.500 2.500z" fill="#2f7cc4"/><path d="M-8 4.500c3 2 6.500 2 9.500 0v2.500h-9.500z" fill="#cfe3f5" opacity=".85"/><path d="M7.500 7v-13" stroke="#333" stroke-width="1.100"/><path d="M5.500-4.500l2-3.500 2 3.500z" fill="#333"/></g>
<path d="M1119.5 1019v5.500" stroke="#cacaca" stroke-width="1.800"/>
<g transform="translate(1143.5 1007.8)"><path d="M-1-7.500l-6.500 14.500h6.500z" fill="#f4f4f4" stroke="#555" stroke-width=".9"/><path d="M1-7.500l6.500 14.500h-6.500z" fill="#4a9be0" stroke="#2b6cb0" stroke-width=".9"/></g>
<path d="M1143.5 1019v5.500" stroke="#cacaca" stroke-width="1.800"/>
<g transform="translate(1167.5 1007.8)"><path d="M-1-7.500l-6.500 14.500h6.500z" fill="#f4f4f4" stroke="#555" stroke-width=".9"/><path d="M1-7.500l6.500 14.500h-6.500z" fill="#4a9be0" stroke="#2b6cb0" stroke-width=".9"/></g>
<path d="M1167.5 1019v5.500" stroke="#cacaca" stroke-width="1.800"/>
<g transform="translate(1191.6 1007.8)"><path d="M-1-7.500l-6.500 14.500h6.500z" fill="#f4f4f4" stroke="#555" stroke-width=".9"/><path d="M1-7.500l6.500 14.500h-6.500z" fill="#4a9be0" stroke="#2b6cb0" stroke-width=".9"/></g>
<path d="M1191.6 1019v5.500" stroke="#cacaca" stroke-width="1.800"/>
<g transform="translate(1215.6 1007.8)"><path d="M-7.500-6.500h13v12.500h-13z" fill="none" stroke="#333" stroke-width="1" stroke-dasharray="3 1.800"/><g fill="#2b6cb0"><rect x="-9" y="-8" width="2.800" height="2.800"/><rect x="4.200" y="-8" width="2.800" height="2.800"/><rect x="-9" y="4.700" width="2.800" height="2.800"/></g><path d="M1 7.500l.8-2.800 5.200-4.200 2 2.200-5.200 4.200z" fill="#f2b632" stroke="#b8741a" stroke-width=".5"/><path d="M7 .5l1-.8c.7-.5 2.500 1.300 1.900 2l-.9 1z" fill="#e24a3a"/><path d="M1 7.500l.4-1.500 1.200 1.100z" fill="#333"/></g>
<path d="M1215.6 1019v5.500" stroke="#cacaca" stroke-width="1.800"/>
<g transform="translate(1239.6 1007.8)"><path d="M-8 7v-11l2.500-2.500h9.500v11l-2.500 2.500z" fill="#4a9be0" stroke="#2b6cb0" stroke-width=".8"/><path d="M-8-4l2.500-2.500h9.500l-2.500 2.500z" fill="#a6d2f5"/><path d="M1.500-4l2.500-2.500v11l-2.500 2.500z" fill="#2f7cc4"/><path d="M-8 4.500c3 2 6.500 2 9.500 0v2.500h-9.500z" fill="#cfe3f5" opacity=".85"/><path d="M7.500 7v-13" stroke="#333" stroke-width="1.100"/><path d="M5.500-4.500l2-3.500 2 3.500z" fill="#333"/></g>
<path d="M1239.6 1019v5.500" stroke="#cacaca" stroke-width="1.800"/>
<g transform="translate(1263.7 1007.8)"><path d="M-7.500-6.500h13v12.500h-13z" fill="none" stroke="#333" stroke-width="1" stroke-dasharray="3 1.800"/><g fill="#2b6cb0"><rect x="-9" y="-8" width="2.800" height="2.800"/><rect x="4.200" y="-8" width="2.800" height="2.800"/><rect x="-9" y="4.700" width="2.800" height="2.800"/></g><path d="M1 7.500l.8-2.800 5.200-4.200 2 2.200-5.200 4.200z" fill="#f2b632" stroke="#b8741a" stroke-width=".5"/><path d="M7 .5l1-.8c.7-.5 2.500 1.300 1.900 2l-.9 1z" fill="#e24a3a"/><path d="M1 7.500l.4-1.500 1.200 1.100z" fill="#333"/></g>
<path d="M1263.7 1019v5.500" stroke="#cacaca" stroke-width="1.800"/>
<g transform="translate(1287.7 1007.8)"><path d="M-8 7v-11l2.500-2.500h9.500v11l-2.500 2.500z" fill="#4a9be0" stroke="#2b6cb0" stroke-width=".8"/><path d="M-8-4l2.500-2.500h9.500l-2.500 2.500z" fill="#a6d2f5"/><path d="M1.500-4l2.500-2.500v11l-2.500 2.500z" fill="#2f7cc4"/><path d="M-8 4.500c3 2 6.500 2 9.500 0v2.500h-9.500z" fill="#cfe3f5" opacity=".85"/><path d="M7.500 7v-13" stroke="#333" stroke-width="1.100"/><path d="M5.500-4.500l2-3.500 2 3.500z" fill="#333"/></g>
<path d="M1287.7 1019v5.500" stroke="#cacaca" stroke-width="1.800"/>
<g transform="translate(1311.7 1007.8)"><path d="M-8 7v-11l2.500-2.500h9.500v11l-2.500 2.500z" fill="#4a9be0" stroke="#2b6cb0" stroke-width=".8"/><path d="M-8-4l2.500-2.500h9.500l-2.500 2.500z" fill="#a6d2f5"/><path d="M1.500-4l2.500-2.500v11l-2.500 2.500z" fill="#2f7cc4"/><path d="M-8 4.500c3 2 6.500 2 9.500 0v2.500h-9.500z" fill="#cfe3f5" opacity=".85"/><path d="M7.500 7v-13" stroke="#333" stroke-width="1.100"/><path d="M5.500-4.500l2-3.500 2 3.500z" fill="#333"/></g>
<path d="M1311.7 1019v5.500" stroke="#cacaca" stroke-width="1.800"/>
<g transform="translate(1335.7 1007.8)"><path d="M-1-7.500l-6.500 14.500h6.500z" fill="#f4f4f4" stroke="#555" stroke-width=".9"/><path d="M1-7.500l6.500 14.500h-6.500z" fill="#4a9be0" stroke="#2b6cb0" stroke-width=".9"/></g>
<path d="M1335.7 1019v5.500" stroke="#cacaca" stroke-width="1.800"/>
<g transform="translate(1359.8 1007.8)"><path d="M-1-7.500l-6.500 14.500h6.500z" fill="#f4f4f4" stroke="#555" stroke-width=".9"/><path d="M1-7.500l6.500 14.500h-6.500z" fill="#4a9be0" stroke="#2b6cb0" stroke-width=".9"/></g>
<path d="M1359.8 1019v5.500" stroke="#cacaca" stroke-width="1.800"/>
<g transform="translate(1383.8 1007.8)"><path d="M-7.500-6.500h13v12.500h-13z" fill="none" stroke="#333" stroke-width="1" stroke-dasharray="3 1.800"/><g fill="#2b6cb0"><rect x="-9" y="-8" width="2.800" height="2.800"/><rect x="4.200" y="-8" width="2.800" height="2.800"/><rect x="-9" y="4.700" width="2.800" height="2.800"/></g><path d="M1 7.500l.8-2.800 5.200-4.200 2 2.200-5.200 4.200z" fill="#f2b632" stroke="#b8741a" stroke-width=".5"/><path d="M7 .5l1-.8c.7-.5 2.500 1.300 1.900 2l-.9 1z" fill="#e24a3a"/><path d="M1 7.500l.4-1.500 1.200 1.100z" fill="#333"/></g>
<path d="M1383.8 1019v5.500" stroke="#cacaca" stroke-width="1.800"/>
<g transform="translate(1407.8 1007.8)"><path d="M-8 7v-11l2.500-2.500h9.500v11l-2.500 2.500z" fill="#4a9be0" stroke="#2b6cb0" stroke-width=".8"/><path d="M-8-4l2.500-2.500h9.500l-2.500 2.500z" fill="#a6d2f5"/><path d="M1.500-4l2.500-2.500v11l-2.500 2.500z" fill="#2f7cc4"/><path d="M-8 4.500c3 2 6.500 2 9.500 0v2.500h-9.500z" fill="#cfe3f5" opacity=".85"/><path d="M7.500 7v-13" stroke="#333" stroke-width="1.100"/><path d="M5.500-4.500l2-3.500 2 3.500z" fill="#333"/></g>
<path d="M1407.8 1019v5.500" stroke="#cacaca" stroke-width="1.800"/>
<g transform="translate(1431.9 1007.8)"><path d="M-7.500-6.500h13v12.500h-13z" fill="none" stroke="#333" stroke-width="1" stroke-dasharray="3 1.800"/><g fill="#2b6cb0"><rect x="-9" y="-8" width="2.800" height="2.800"/><rect x="4.200" y="-8" width="2.800" height="2.800"/><rect x="-9" y="4.700" width="2.800" height="2.800"/></g><path d="M1 7.500l.8-2.800 5.200-4.200 2 2.200-5.200 4.200z" fill="#f2b632" stroke="#b8741a" stroke-width=".5"/><path d="M7 .5l1-.8c.7-.5 2.500 1.300 1.900 2l-.9 1z" fill="#e24a3a"/><path d="M1 7.500l.4-1.500 1.200 1.100z" fill="#333"/></g>
<path d="M1431.9 1019v5.500" stroke="#cacaca" stroke-width="1.800"/>
<g transform="translate(1455.9 1007.8)"><path d="M-8 7v-11l2.500-2.500h9.500v11l-2.500 2.500z" fill="#4a9be0" stroke="#2b6cb0" stroke-width=".8"/><path d="M-8-4l2.500-2.500h9.500l-2.500 2.500z" fill="#a6d2f5"/><path d="M1.500-4l2.500-2.500v11l-2.500 2.500z" fill="#2f7cc4"/><path d="M-8 4.500c3 2 6.500 2 9.500 0v2.500h-9.500z" fill="#cfe3f5" opacity=".85"/><path d="M7.500 7v-13" stroke="#333" stroke-width="1.100"/><path d="M5.500-4.500l2-3.500 2 3.500z" fill="#333"/></g>
<path d="M1455.9 1019v5.500" stroke="#cacaca" stroke-width="1.800"/>
<g transform="translate(1479.9 1007.8)"><path d="M-8 7v-11l2.500-2.500h9.500v11l-2.500 2.500z" fill="#4a9be0" stroke="#2b6cb0" stroke-width=".8"/><path d="M-8-4l2.500-2.500h9.500l-2.500 2.500z" fill="#a6d2f5"/><path d="M1.500-4l2.500-2.500v11l-2.500 2.500z" fill="#2f7cc4"/><path d="M-8 4.500c3 2 6.500 2 9.500 0v2.500h-9.500z" fill="#cfe3f5" opacity=".85"/><path d="M7.500 7v-13" stroke="#333" stroke-width="1.100"/><path d="M5.500-4.500l2-3.500 2 3.500z" fill="#333"/></g>
<path d="M1479.9 1019v5.500" stroke="#cacaca" stroke-width="1.800"/>
<g transform="translate(1504.0 1007.8)"><path d="M-8 7v-11l2.500-2.500h9.500v11l-2.500 2.500z" fill="#4a9be0" stroke="#2b6cb0" stroke-width=".8"/><path d="M-8-4l2.500-2.500h9.500l-2.500 2.500z" fill="#a6d2f5"/><path d="M1.500-4l2.500-2.500v11l-2.500 2.500z" fill="#2f7cc4"/><path d="M-8 4.500c3 2 6.500 2 9.500 0v2.500h-9.500z" fill="#cfe3f5" opacity=".85"/><path d="M7.500 7v-13" stroke="#333" stroke-width="1.100"/><path d="M5.500-4.500l2-3.500 2 3.500z" fill="#333"/></g>
<path d="M1504.0 1019v5.500" stroke="#cacaca" stroke-width="1.800"/>
<g transform="translate(1528.0 1007.8)"><path d="M-7.500-6.500h13v12.500h-13z" fill="none" stroke="#333" stroke-width="1" stroke-dasharray="3 1.800"/><g fill="#2b6cb0"><rect x="-9" y="-8" width="2.800" height="2.800"/><rect x="4.200" y="-8" width="2.800" height="2.800"/><rect x="-9" y="4.700" width="2.800" height="2.800"/></g><path d="M1 7.500l.8-2.800 5.200-4.200 2 2.200-5.200 4.200z" fill="#f2b632" stroke="#b8741a" stroke-width=".5"/><path d="M7 .5l1-.8c.7-.5 2.500 1.300 1.900 2l-.9 1z" fill="#e24a3a"/><path d="M1 7.500l.4-1.500 1.200 1.100z" fill="#333"/></g>
<path d="M1528.0 1019v5.500" stroke="#cacaca" stroke-width="1.800"/>
<g transform="translate(1552.0 1007.8)"><path d="M-8 7v-11l2.500-2.500h9.500v11l-2.500 2.500z" fill="#4a9be0" stroke="#2b6cb0" stroke-width=".8"/><path d="M-8-4l2.500-2.500h9.500l-2.500 2.500z" fill="#a6d2f5"/><path d="M1.500-4l2.500-2.500v11l-2.500 2.500z" fill="#2f7cc4"/><path d="M-8 4.500c3 2 6.500 2 9.500 0v2.500h-9.500z" fill="#cfe3f5" opacity=".85"/><path d="M7.500 7v-13" stroke="#333" stroke-width="1.100"/><path d="M5.500-4.500l2-3.500 2 3.500z" fill="#333"/></g>
<path d="M1552.0 1019v5.500" stroke="#cacaca" stroke-width="1.800"/>
<g transform="translate(1576.0 1007.8)"><path d="M-8 7v-11l2.500-2.500h9.500v11l-2.500 2.500z" fill="#4a9be0" stroke="#2b6cb0" stroke-width=".8"/><path d="M-8-4l2.500-2.500h9.500l-2.500 2.500z" fill="#a6d2f5"/><path d="M1.500-4l2.500-2.500v11l-2.500 2.500z" fill="#2f7cc4"/><path d="M-8 4.500c3 2 6.500 2 9.500 0v2.500h-9.500z" fill="#cfe3f5" opacity=".85"/><path d="M7.500 7v-13" stroke="#333" stroke-width="1.100"/><path d="M5.500-4.500l2-3.500 2 3.500z" fill="#333"/></g>
<path d="M1576.0 1019v5.500" stroke="#cacaca" stroke-width="1.800"/>
<g transform="translate(1600.1 1007.8)"><path d="M-7.500-6.500h13v12.500h-13z" fill="none" stroke="#333" stroke-width="1" stroke-dasharray="3 1.800"/><g fill="#2b6cb0"><rect x="-9" y="-8" width="2.800" height="2.800"/><rect x="4.200" y="-8" width="2.800" height="2.800"/><rect x="-9" y="4.700" width="2.800" height="2.800"/></g><path d="M1 7.500l.8-2.800 5.200-4.200 2 2.200-5.200 4.200z" fill="#f2b632" stroke="#b8741a" stroke-width=".5"/><path d="M7 .5l1-.8c.7-.5 2.500 1.300 1.900 2l-.9 1z" fill="#e24a3a"/><path d="M1 7.500l.4-1.500 1.200 1.100z" fill="#333"/></g>
<path d="M1600.1 1019v5.500" stroke="#cacaca" stroke-width="1.800"/>
<g transform="translate(1624.1 1007.8)"><path d="M-8 7v-11l2.500-2.500h9.500v11l-2.500 2.500z" fill="#4a9be0" stroke="#2b6cb0" stroke-width=".8"/><path d="M-8-4l2.500-2.500h9.500l-2.500 2.500z" fill="#a6d2f5"/><path d="M1.500-4l2.500-2.500v11l-2.500 2.500z" fill="#2f7cc4"/><path d="M-8 4.500c3 2 6.500 2 9.500 0v2.500h-9.500z" fill="#cfe3f5" opacity=".85"/><path d="M7.500 7v-13" stroke="#333" stroke-width="1.100"/><path d="M5.500-4.500l2-3.500 2 3.500z" fill="#333"/></g>
<path d="M1624.1 1019v5.500" stroke="#cacaca" stroke-width="1.800"/>
<g transform="translate(1648.1 1007.8)"><path d="M-7.500 7.500v-12l3-3h12v12l-3 3z" fill="#f6f6f6" stroke="#444" stroke-width="1.100"/><path d="M4.500-4.500l3-3M-7.500-4.500h12v12" fill="none" stroke="#777" stroke-width=".8"/><path d="M-5 5v-7h3.500v3.500h4v3.500z" fill="#3f8fd8" stroke="#2b6cb0" stroke-width=".6"/></g>
<path d="M1648.1 1019v5.500" stroke="#cacaca" stroke-width="1.800"/>
<g transform="translate(1672.2 1007.8)"><path d="M-7.500-6.500h13v12.500h-13z" fill="none" stroke="#333" stroke-width="1" stroke-dasharray="3 1.800"/><g fill="#2b6cb0"><rect x="-9" y="-8" width="2.800" height="2.800"/><rect x="4.200" y="-8" width="2.800" height="2.800"/><rect x="-9" y="4.700" width="2.800" height="2.800"/></g><path d="M1 7.500l.8-2.800 5.200-4.200 2 2.200-5.200 4.200z" fill="#f2b632" stroke="#b8741a" stroke-width=".5"/><path d="M7 .5l1-.8c.7-.5 2.500 1.300 1.900 2l-.9 1z" fill="#e24a3a"/><path d="M1 7.500l.4-1.500 1.200 1.100z" fill="#333"/></g>
<path d="M1672.2 1019v5.500" stroke="#cacaca" stroke-width="1.800"/>
<g transform="translate(1695.7 1007.8)" opacity=".3"><path d="M-8 7v-11l2.500-2.500h9.500v11l-2.500 2.500z" fill="#4a9be0" stroke="#2b6cb0" stroke-width=".8"/><path d="M-8-4l2.500-2.500h9.500l-2.500 2.500z" fill="#a6d2f5"/><path d="M1.500-4l2.500-2.500v11l-2.500 2.500z" fill="#2f7cc4"/><path d="M-8 4.500c3 2 6.500 2 9.500 0v2.500h-9.500z" fill="#cfe3f5" opacity=".85"/><path d="M7.500 7v-13" stroke="#333" stroke-width="1.100"/><path d="M5.500-4.500l2-3.500 2 3.500z" fill="#333"/></g>
<g transform="translate(1719.7 1007.8)" opacity=".3"><path d="M-8 1l8-8.500 8.500 6.500-8 8.500z" fill="#d9782d" stroke="#a85a1c" stroke-width=".7"/><path d="M-3-1l3.500-3.800 4 3-3.500 3.800z" fill="#f7e9c0"/><path d="M-8.500 2v6h7" fill="none" stroke="#555" stroke-width="1"/></g>
<path d="M415 1024.800h1305" stroke="#cacaca" stroke-width="2"/>
<path d="M1695.7 1019v5.500" stroke="#d4d4d4" stroke-width="1.800"/>
<path d="M1719.7 1019v5.500" stroke="#d4d4d4" stroke-width="1.800"/>
<path d="M406 1024.800h9" stroke="#cacaca" stroke-width="2" stroke-dasharray="2.500 1.500"/>
<path d="M1677 994.300h12.400l-5.200 7v24h-2v-24z" fill="#4a4a4a"/>
<g transform="translate(1768 1013)" fill="#9a9a9a"><circle r="5.800"/><rect x="-1.800" y="-8.200" width="3.600" height="16.400" rx=".8" transform="rotate(0)"/><rect x="-1.800" y="-8.200" width="3.600" height="16.400" rx=".8" transform="rotate(45)"/><rect x="-1.800" y="-8.200" width="3.600" height="16.400" rx=".8" transform="rotate(90)"/><rect x="-1.800" y="-8.200" width="3.600" height="16.400" rx=".8" transform="rotate(135)"/></g><circle cx="1768" cy="1013" r="3" fill="#f0f0f0"/>
</svg>
</body>
</html>
